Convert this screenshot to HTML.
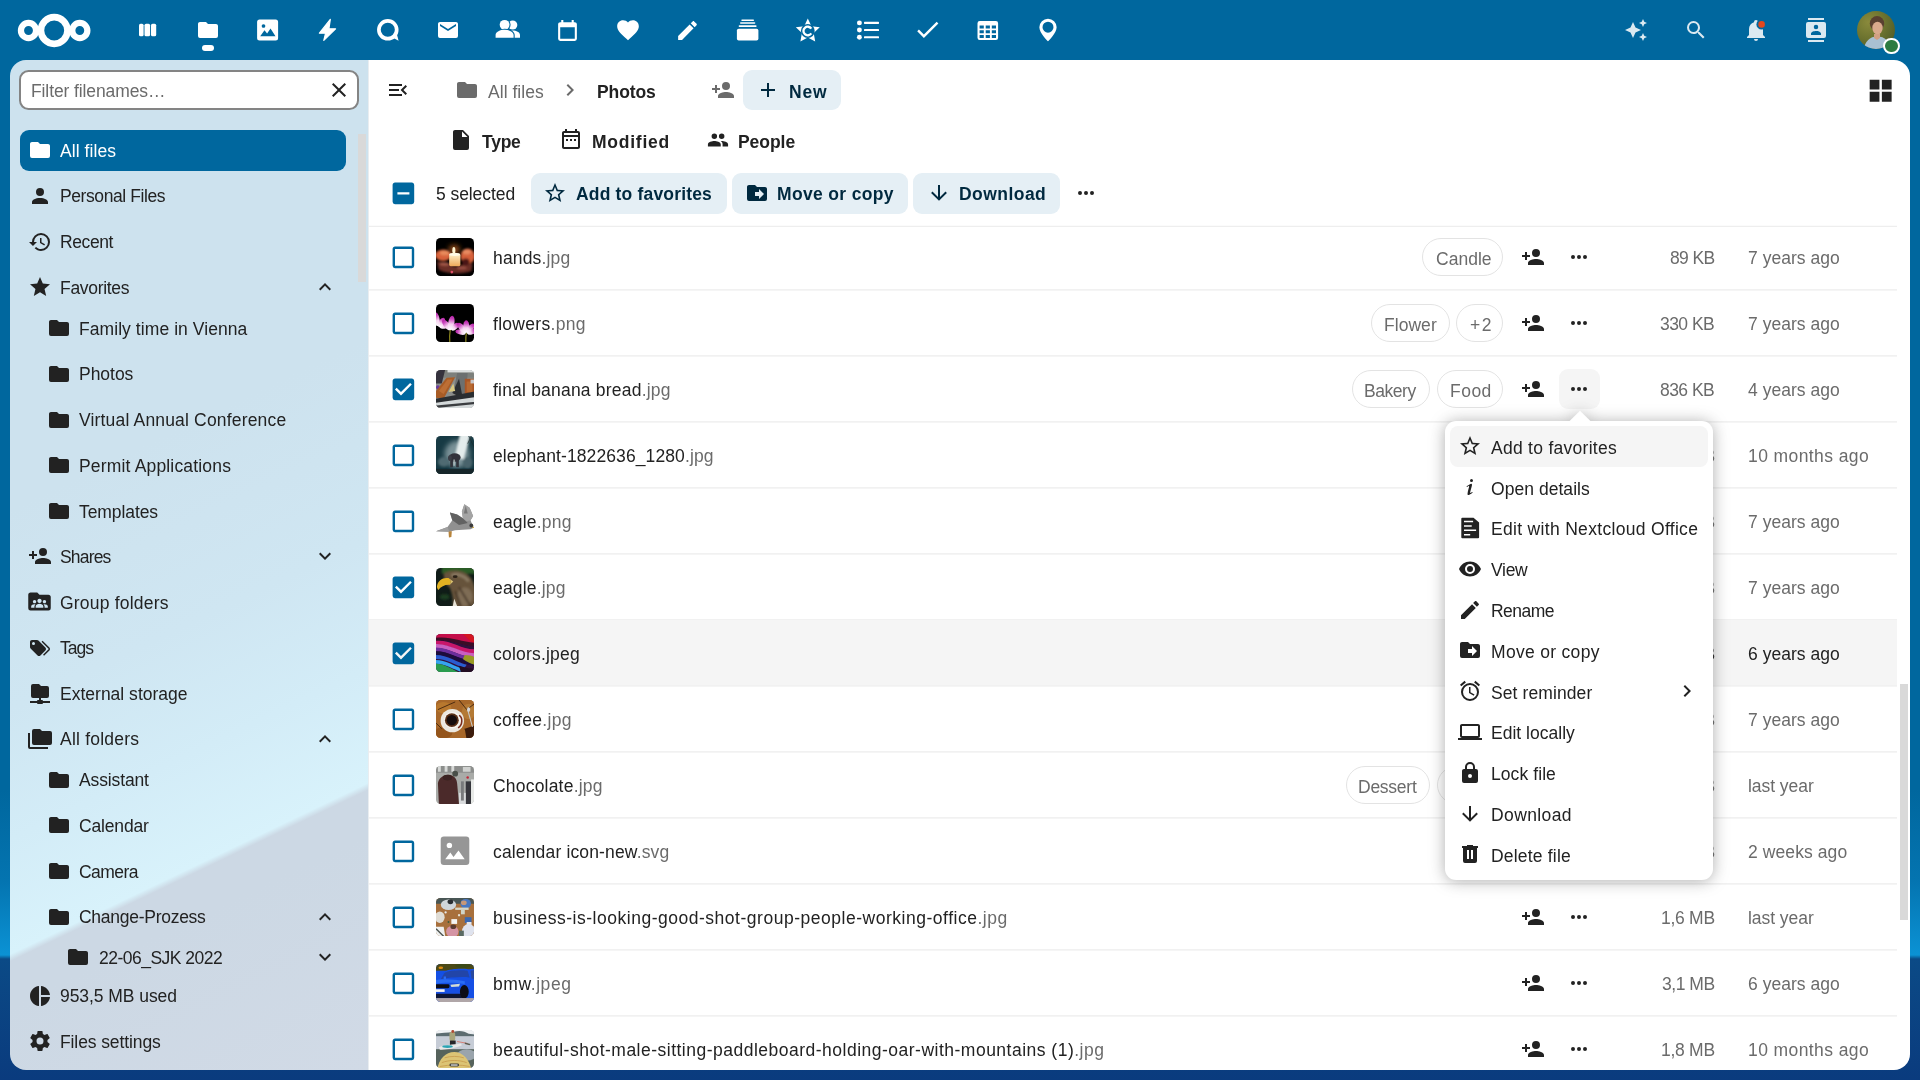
<!DOCTYPE html>
<html><head><meta charset="utf-8"><title>Photos - Files - Nextcloud</title>
<style>
html,body{margin:0;padding:0}
body{width:1920px;height:1080px;position:relative;overflow:hidden;font-family:"Liberation Sans",sans-serif;
background:linear-gradient(180deg,#00679e 0,#00679e 790px,#0474b0 880px,#0b92d4 955px,#0b4a86 959px,#0a3b7e 1080px)}
.t{will-change:transform;position:absolute;height:24px;line-height:24px;white-space:pre;font-family:"Liberation Sans",sans-serif}
svg{display:block;overflow:visible}
</style></head><body>
<svg width="0" height="0" style="position:absolute"><defs><filter id="b05" x="-20%" y="-20%" width="140%" height="140%"><feGaussianBlur stdDeviation=".35"/></filter><filter id="b1" x="-20%" y="-20%" width="140%" height="140%"><feGaussianBlur stdDeviation=".6"/></filter><filter id="b2" x="-30%" y="-30%" width="160%" height="160%"><feGaussianBlur stdDeviation="1.3"/></filter><filter id="b4" x="-50%" y="-50%" width="200%" height="200%"><feGaussianBlur stdDeviation="3"/></filter><linearGradient id="gc" x1="0" y1="0" x2="0" y2="1"><stop offset="0" stop-color="#fff2cc"/><stop offset="1" stop-color="#eea858"/></linearGradient><linearGradient id="gf" x1="0" y1="1" x2="0" y2="0"><stop offset="0" stop-color="#fff"/><stop offset=".4" stop-color="#f6d2f0"/><stop offset=".75" stop-color="#cc4cc0"/><stop offset="1" stop-color="#b41ca4"/></linearGradient></defs></svg>
<svg style="position:absolute;left:10.00px;top:5.00px;" width="100" height="50" viewBox="10 5 100 50"><g fill="none" stroke="#fff"><circle cx="28.5" cy="30.5" r="7.55" stroke-width="6.25"/><circle cx="79.8" cy="30.5" r="7.55" stroke-width="6.25"/><circle cx="54.2" cy="30.5" r="13.3" stroke-width="6.7"/></g></svg>
<svg style="position:absolute;left:135.00px;top:18.00px;" width="26" height="24" viewBox="135 18 26 24"><g fill="#fff"><rect x="139" y="23.75" width="4.6" height="12.5" rx="1.6"/><rect x="144.5" y="23.75" width="5.6" height="12.5" rx="1.6"/><rect x="151" y="23.75" width="5.2" height="12.5" rx="1.6"/></g></svg>
<svg style="position:absolute;left:195.80px;top:18.00px" width="24" height="24" viewBox="0 0 24 24"><path fill="#fff" d="M10,4H4C2.89,4 2,4.89 2,6V18A2,2 0 0,0 4,20H20A2,2 0 0,0 22,18V8C22,6.89 21.1,6 20,6H12L10,4Z"/></svg>
<div style="position:absolute;left:201.80px;top:44.50px;width:12.00px;height:6.00px;background:#fff;border-radius:3px"></div>
<svg style="position:absolute;left:255.00px;top:17.00px;" width="26" height="26" viewBox="255 17 26 26"><path fill="#fff" fill-rule="evenodd" d="M259.6,19.4h16a2.5,2.5 0 0 1 2.5,2.5v16.2a2.5,2.5 0 0 1 -2.5,2.5h-16a2.5,2.5 0 0 1 -2.5,-2.5v-16.2a2.5,2.5 0 0 1 2.5,-2.5zM263.5,24.2a1.8,1.8 0 1 0 0.01,0z M260.2,36.2l4.3,-6 2.6,3.4 3.4,-5.2 5,7.8z"/></svg>
<svg style="position:absolute;left:315.00px;top:16.00px;" width="26" height="28" viewBox="315 16 26 28"><path fill="#fff" stroke="#fff" stroke-width="1.2" stroke-linejoin="round" d="M330.3,19.4 L319.4,33.2 H325.6 L323.8,40.4 L335.6,28.8 H328.9 Z"/></svg>
<svg style="position:absolute;left:375.00px;top:17.00px;" width="26" height="26" viewBox="375 17 26 26"><circle cx="387.8" cy="29.8" r="8.9" fill="none" stroke="#fff" stroke-width="3.7"/><path fill="#fff" d="M392.5,37.5 L398.6,40.8 L396.8,34z"/></svg>
<svg style="position:absolute;left:435.90px;top:18.00px" width="24" height="24" viewBox="0 0 24 24"><path fill="#fff" d="M20,8L12,13L4,8V6L12,11L20,6M20,4H4C2.89,4 2,4.89 2,6V18A2,2 0 0,0 4,20H20A2,2 0 0,0 22,18V6C22,4.89 21.1,4 20,4Z"/></svg>
<svg style="position:absolute;left:493.00px;top:17.00px;" width="30" height="26" viewBox="493 17 30 26"><g fill="#fff"><circle cx="512.7" cy="25" r="4.6"/><path d="M509.5,37.7v-2.2c0,-1.8 -.8,-3.2 -2,-4.2 1.7,-.5 3.6,-.8 5.2,-.8 3.6,0 7.3,1.6 7.3,4.6v2.6z"/><g stroke="#00679e" stroke-width="2.2" paint-order="stroke"><circle cx="504.6" cy="24.8" r="4.9"/><path d="M495.6,37.7v-2.6c0,-3.4 4.6,-5.3 9,-5.3s9,1.9 9,5.3v2.6z"/></g></g></svg>
<svg style="position:absolute;left:555.25px;top:18.50px" width="25" height="25" viewBox="0 0 24 24"><path fill="#fff" d="M19,19H5V8H19M16,1V3H8V1H6V3H5C3.89,3 3,3.89 3,5V19A2,2 0 0,0 5,21H19A2,2 0 0,0 21,19V5C21,3.89 20.1,3 19,3H18V1"/></svg>
<svg style="position:absolute;left:614.70px;top:17.10px" width="26" height="26" viewBox="0 0 24 24"><path fill="#fff" d="M12,21.35L10.55,20.03C5.4,15.36 2,12.27 2,8.5C2,5.41 4.42,3 7.5,3C9.24,3 10.91,3.81 12,5.08C13.09,3.81 14.76,3 16.5,3C19.58,3 22,5.41 22,8.5C22,12.27 18.6,15.36 13.45,20.03L12,21.35Z"/></svg>
<svg style="position:absolute;left:675.10px;top:17.80px" width="25" height="25" viewBox="0 0 24 24"><path fill="#fff" d="M20.71,7.04C21.1,6.65 21.1,6 20.71,5.63L18.37,3.29C18,2.9 17.35,2.9 16.96,3.29L15.12,5.12L18.87,8.87M3,17.25V21H6.75L17.81,9.93L14.06,6.18L3,17.25Z"/></svg>
<svg style="position:absolute;left:735.00px;top:17.00px;" width="26" height="26" viewBox="735 17 26 26"><g fill="#fff"><rect x="736.9" y="28.8" width="21.5" height="11.8" rx="1.8"/><rect x="738.7" y="25.3" width="17.9" height="1.7" rx=".8"/><rect x="740" y="22.2" width="15.3" height="1.6" rx=".8"/><rect x="741.3" y="19.4" width="12.7" height="1.5" rx=".7"/></g></svg>
<svg style="position:absolute;left:794.00px;top:16.00px;" width="28" height="28" viewBox="794 16 28 28"><polygon fill="#fff" points="807.80,18.60 811.44,26.18 819.78,27.31 813.70,33.12 815.21,41.39 807.80,37.40 800.39,41.39 801.90,33.12 795.82,27.31 804.16,26.18"/><circle cx="807.8" cy="31" r="6.9" fill="#00679e"/><path d="M811.3,28.6 A4.3,4.3 0 1 0 811.3,33.4" fill="none" stroke="#fff" stroke-width="2.3"/></svg>
<svg style="position:absolute;left:855.00px;top:18.00px;" width="26" height="24" viewBox="855 18 26 24"><g fill="#fff"><circle cx="859.4" cy="22.9" r="2.45"/><rect x="864" y="21.849999999999998" width="15" height="2.1" rx=".6"/><circle cx="859.4" cy="30.05" r="2.45"/><rect x="864" y="29.0" width="15" height="2.1" rx=".6"/><circle cx="859.4" cy="37.2" r="2.45"/><rect x="864" y="36.150000000000006" width="15" height="2.1" rx=".6"/></g></svg>
<svg style="position:absolute;left:913.10px;top:15.40px" width="29" height="29" viewBox="0 0 24 24"><path fill="#fff" d="M21,7L9,19L3.5,13.5L4.91,12.09L9,16.17L19.59,5.59L21,7Z"/></svg>
<svg style="position:absolute;left:975.00px;top:18.00px;" width="26" height="26" viewBox="975 18 26 26"><path fill="#fff" fill-rule="evenodd" d="M979.7,21h16.2a2.2,2.2 0 0 1 2.2,2.2v14.6a2.2,2.2 0 0 1 -2.2,2.2h-16.2a2.2,2.2 0 0 1 -2.2,-2.2v-14.6a2.2,2.2 0 0 1 2.2,-2.2zM979.6,25.4h4.2v3h-4.2z M985.7,25.4h4.2v3h-4.2z M991.8,25.4h4.2v3h-4.2zM979.6,30.2h4.2v3h-4.2z M985.7,30.2h4.2v3h-4.2z M991.8,30.2h4.2v3h-4.2zM979.6,35h4.2v3h-4.2z M985.7,35h4.2v3h-4.2z M991.8,35h4.2v3h-4.2z"/></svg>
<svg style="position:absolute;left:1033.50px;top:16.00px;" width="28" height="28" viewBox="0 0 24 24"><path fill="#fff" fill-rule="evenodd" d="M12,2.3A7.4,7.4 0 0 0 4.6,9.7C4.6,14.9 12,21.7 12,21.7C12,21.7 19.4,14.9 19.4,9.7A7.4,7.4 0 0 0 12,2.3Z M12,14.3A4.7,4.7 0 1 1 12,4.9A4.7,4.7 0 0 1 12,14.3Z"/></svg>
<svg style="position:absolute;left:1624.00px;top:18.30px" width="24" height="24" viewBox="0 0 24 24"><path fill="#dbe9f1" d="M19,1L17.74,3.75L15,5L17.74,6.26L19,9L20.25,6.26L23,5L20.25,3.75M9,4L6.5,9.5L1,12L6.5,14.5L9,20L11.5,14.5L17,12L11.5,9.5M19,15L17.74,17.74L15,19L17.74,20.25L19,23L20.25,20.25L23,19L20.25,17.74"/></svg>
<svg style="position:absolute;left:1683.75px;top:18.45px" width="24" height="24" viewBox="0 0 24 24"><path fill="#dbe9f1" d="M9.5,3A6.5,6.5 0 0,1 16,9.5C16,11.11 15.41,12.59 14.44,13.73L14.71,14H15.5L20.5,19L19,20.5L14,15.5V14.71L13.73,14.44C12.59,15.41 11.11,16 9.5,16A6.5,6.5 0 0,1 3,9.5A6.5,6.5 0 0,1 9.5,3M9.5,5C7,5 5,7 5,9.5C5,12 7,14 9.5,14C12,14 14,12 14,9.5C14,7 12,5 9.5,5Z"/></svg>
<svg style="position:absolute;left:1743.80px;top:17.80px" width="24" height="24" viewBox="0 0 24 24"><path fill="#dbe9f1" d="M21,19V20H3V19L5,17V11C5,7.9 7.03,5.17 10,4.29C10,4.19 10,4.1 10,4A2,2 0 0,1 12,2A2,2 0 0,1 14,4C14,4.1 14,4.19 14,4.29C16.97,5.17 19,7.9 19,11V17L21,19M14,21A2,2 0 0,1 12,23A2,2 0 0,1 10,21"/></svg>
<svg style="position:absolute;left:1750.00px;top:15.00px;" width="20" height="20" viewBox="1750 15 20 20"><circle cx="1761.6" cy="24.4" r="5.2" fill="#00679e"/><circle cx="1761.6" cy="24.4" r="3.3" fill="#e2471d"/></svg>
<svg style="position:absolute;left:1804.00px;top:18.00px" width="24" height="24" viewBox="0 0 24 24"><path fill="#dbe9f1" d="M20,0H4V2H20V0M4,24H20V22H4V24M20,4H4A2,2 0 0,0 2,6V18A2,2 0 0,0 4,20H20A2,2 0 0,0 22,18V6A2,2 0 0,0 20,4M12,6.75A2.25,2.25 0 0,1 14.25,9A2.25,2.25 0 0,1 12,11.25A2.25,2.25 0 0,1 9.75,9A2.25,2.25 0 0,1 12,6.75M17,17H7V15.5C7,13.83 10.33,13 12,13C13.67,13 17,13.83 17,15.5V17Z"/></svg>
<div style="position:absolute;left:1856.8px;top:10.8px;width:38.4px;height:38.4px;border-radius:50%;overflow:hidden;background:radial-gradient(circle at 30% 30%,#8a8a3c 0,#6f7530 40%,#55602a 75%,#4a5426 100%)"><svg width="38.4" height="38.4" viewBox="0 0 38.4 38.4" style="position:absolute;left:0;top:0;filter:blur(.6px)"><ellipse cx="20" cy="12.5" rx="7.2" ry="7.5" fill="#5a4030"/><ellipse cx="20.5" cy="17" rx="5.2" ry="6.3" fill="#d9a98c"/><path d="M6,40 C8,30 13,25.5 20,25.5 C28,25.5 33,30 34,40z" fill="#a9c0d2"/><path d="M17,23h6v4l-3,2 -3,-2z" fill="#d2a084"/></svg></div>
<div style="position:absolute;left:1883.10px;top:37.80px;width:16.60px;height:16.60px;border-radius:50%;background:#2d7b41;border:2.4px solid #fff;box-sizing:border-box"></div>
<div id="nav" style="position:absolute;left:10px;top:60px;width:358px;height:1010px;border-radius:16px 0 0 16px;overflow:hidden;background:linear-gradient(154.4deg,#cde2ee 0,#cde2ee 38%,#cfe6f2 55%,#d3ecf7 66%,#d8f2fb 75.7%,#ccd8e4 76.3%,#ccd8e4 80%,#d1dae6 100%)"></div>
<div style="position:absolute;left:368.00px;top:60.00px;width:1.00px;height:1010.00px;background:#e9edf0"></div>
<div id="main" style="position:absolute;left:369px;top:60px;width:1541px;height:1010px;border-radius:0 16px 16px 0;background:#fff"></div>
<div style="position:absolute;left:19.4px;top:69.7px;width:339.4px;height:40.5px;box-sizing:border-box;border:2.2px solid #848484;border-radius:9.5px;background:#fff"></div>
<div class="t" style="left:30.75px;top:79.00px;font-size:17.5px;font-weight:400;letter-spacing:-0.103px"><span style="color:#6b6b6b">Filter filenames…</span></div>
<svg style="position:absolute;left:326.75px;top:78.00px" width="24" height="24" viewBox="0 0 24 24"><path fill="#222222" d="M19,6.41L17.59,5L12,10.59L6.41,5L5,6.41L10.59,12L5,17.59L6.41,19L12,13.41L17.59,19L19,17.59L13.41,12L19,6.41Z"/></svg>
<div style="position:absolute;left:357.80px;top:133.50px;width:8.20px;height:148.00px;background:#d9d9d9"></div>
<div style="position:absolute;left:19.50px;top:130.00px;width:326.30px;height:40.60px;background:#00679e;border-radius:9px"></div>
<svg style="position:absolute;left:27.70px;top:138.20px" width="24" height="24" viewBox="0 0 24 24"><path fill="#fff" d="M10,4H4C2.89,4 2,4.89 2,6V18A2,2 0 0,0 4,20H20A2,2 0 0,0 22,18V8C22,6.89 21.1,6 20,6H12L10,4Z"/></svg>
<div class="t" style="left:60.20px;top:138.70px;font-size:17.5px;font-weight:400;letter-spacing:0.077px"><span style="color:#fff">All files</span></div>
<svg style="position:absolute;left:27.70px;top:183.90px" width="24" height="24" viewBox="0 0 24 24"><path fill="#222222" d="M12,4A4,4 0 0,1 16,8A4,4 0 0,1 12,12A4,4 0 0,1 8,8A4,4 0 0,1 12,4M12,14C16.42,14 20,15.79 20,18V20H4V18C4,15.79 7.58,14 12,14Z"/></svg>
<div class="t" style="left:60.20px;top:184.40px;font-size:17.5px;font-weight:400;letter-spacing:-0.410px"><span style="color:#222222">Personal Files</span></div>
<svg style="position:absolute;left:27.70px;top:229.60px" width="24" height="24" viewBox="0 0 24 24"><path fill="#222222" d="M13.5,8H12V13L16.28,15.54L17,14.33L13.5,12.25V8M13,3A9,9 0 0,0 4,12H1L4.96,16.03L9,12H6A7,7 0 0,1 13,5A7,7 0 0,1 20,12A7,7 0 0,1 13,19C11.07,19 9.32,18.21 8.06,16.94L6.64,18.36C8.27,20 10.5,21 13,21A9,9 0 0,0 22,12A9,9 0 0,0 13,3"/></svg>
<div class="t" style="left:60.20px;top:230.10px;font-size:17.5px;font-weight:400;letter-spacing:-0.407px"><span style="color:#222222">Recent</span></div>
<svg style="position:absolute;left:27.70px;top:275.20px" width="24" height="24" viewBox="0 0 24 24"><path fill="#222222" d="M12,17.27L18.18,21L16.54,13.97L22,9.24L14.81,8.62L12,2L9.19,8.62L2,9.24L7.45,13.97L5.82,21L12,17.27Z"/></svg>
<div class="t" style="left:60.20px;top:275.70px;font-size:17.5px;font-weight:400;letter-spacing:-0.302px"><span style="color:#222222">Favorites</span></div>
<svg style="position:absolute;left:313.00px;top:275.20px" width="24" height="24" viewBox="0 0 24 24"><path fill="#222222" d="M7.41,15.41L12,10.83L16.59,15.41L18,14L12,8L6,14L7.41,15.41Z"/></svg>
<svg style="position:absolute;left:47.00px;top:316.20px" width="24" height="24" viewBox="0 0 24 24"><path fill="#222222" d="M10,4H4C2.89,4 2,4.89 2,6V18A2,2 0 0,0 4,20H20A2,2 0 0,0 22,18V8C22,6.89 21.1,6 20,6H12L10,4Z"/></svg>
<div class="t" style="left:79.40px;top:316.70px;font-size:17.5px;font-weight:400;letter-spacing:0.068px"><span style="color:#222222">Family time in Vienna</span></div>
<svg style="position:absolute;left:47.00px;top:361.90px" width="24" height="24" viewBox="0 0 24 24"><path fill="#222222" d="M10,4H4C2.89,4 2,4.89 2,6V18A2,2 0 0,0 4,20H20A2,2 0 0,0 22,18V8C22,6.89 21.1,6 20,6H12L10,4Z"/></svg>
<div class="t" style="left:79.40px;top:362.40px;font-size:17.5px;font-weight:400;letter-spacing:-0.026px"><span style="color:#222222">Photos</span></div>
<svg style="position:absolute;left:47.00px;top:407.60px" width="24" height="24" viewBox="0 0 24 24"><path fill="#222222" d="M10,4H4C2.89,4 2,4.89 2,6V18A2,2 0 0,0 4,20H20A2,2 0 0,0 22,18V8C22,6.89 21.1,6 20,6H12L10,4Z"/></svg>
<div class="t" style="left:79.40px;top:408.10px;font-size:17.5px;font-weight:400;letter-spacing:0.171px"><span style="color:#222222">Virtual Annual Conference</span></div>
<svg style="position:absolute;left:47.00px;top:453.30px" width="24" height="24" viewBox="0 0 24 24"><path fill="#222222" d="M10,4H4C2.89,4 2,4.89 2,6V18A2,2 0 0,0 4,20H20A2,2 0 0,0 22,18V8C22,6.89 21.1,6 20,6H12L10,4Z"/></svg>
<div class="t" style="left:79.40px;top:453.80px;font-size:17.5px;font-weight:400;letter-spacing:0.170px"><span style="color:#222222">Permit Applications</span></div>
<svg style="position:absolute;left:47.00px;top:499.00px" width="24" height="24" viewBox="0 0 24 24"><path fill="#222222" d="M10,4H4C2.89,4 2,4.89 2,6V18A2,2 0 0,0 4,20H20A2,2 0 0,0 22,18V8C22,6.89 21.1,6 20,6H12L10,4Z"/></svg>
<div class="t" style="left:79.40px;top:499.50px;font-size:17.5px;font-weight:400;letter-spacing:-0.082px"><span style="color:#222222">Templates</span></div>
<svg style="position:absolute;left:27.70px;top:544.30px" width="24" height="24" viewBox="0 0 24 24"><path fill="#222222" d="M15,14C12.33,14 7,15.33 7,18V20H23V18C23,15.33 17.67,14 15,14M6,10V7H4V10H1V12H4V15H6V12H9V10M15,12A4,4 0 0,0 19,8A4,4 0 0,0 15,4A4,4 0 0,0 11,8A4,4 0 0,0 15,12Z"/></svg>
<div class="t" style="left:60.20px;top:544.80px;font-size:17.5px;font-weight:400;letter-spacing:-0.830px"><span style="color:#222222">Shares</span></div>
<svg style="position:absolute;left:313.00px;top:544.30px" width="24" height="24" viewBox="0 0 24 24"><path fill="#222222" d="M7.41,8.58L12,13.17L16.59,8.58L18,10L12,16L6,10L7.41,8.58Z"/></svg>
<div class="t" style="left:60.20px;top:590.50px;font-size:17.5px;font-weight:400;letter-spacing:0.210px"><span style="color:#222222">Group folders</span></div>
<svg style="position:absolute;left:26.25px;top:588.10px;" width="27" height="27" viewBox="0 0 24 24"><path fill="#222222" fill-rule="evenodd" d="M10,4H4C2.89,4 2,4.89 2,6V18A2,2 0 0,0 4,20H20A2,2 0 0,0 22,18V8C22,6.89 21.1,6 20,6H12L10,4Z M12,9.6a1.9,1.9 0 1 0 .01,0z M7.6,10.6a1.5,1.5 0 1 0 .01,0z M16.4,10.6a1.5,1.5 0 1 0 .01,0zM8.6,17.6v-1.3c0,-1.5 1.8,-2.4 3.4,-2.4s3.4,.9 3.4,2.4v1.3z M4.6,17.6v-1.1c0,-1.2 1.4,-2 3,-2c.3,0 .5,0 .8,.1c-.6,.5 -.9,1.100 -.9,1.800v1.200z M19.4,17.6v-1.1c0,-1.2 -1.400,-2 -3,-2c-.3,0 -.5,0 -.8,.1c.6,.5 .9,1.100 .9,1.800v1.200z"/></svg>
<svg style="position:absolute;left:27.70px;top:635.70px" width="24" height="24" viewBox="0 0 24 24"><path fill="#222222" d="M5.5,9A1.5,1.5 0 0,0 7,7.5A1.5,1.5 0 0,0 5.5,6A1.5,1.5 0 0,0 4,7.5A1.5,1.5 0 0,0 5.5,9M17.41,11.58C17.77,11.94 18,12.44 18,13C18,13.55 17.78,14.05 17.41,14.41L12.41,19.41C12.05,19.77 11.55,20 11,20C10.45,20 9.95,19.78 9.58,19.41L2.59,12.42C2.22,12.05 2,11.55 2,11V6C2,4.89 2.89,4 4,4H9C9.55,4 10.05,4.22 10.41,4.58L17.41,11.58M13.54,5.71L14.54,4.71L21.41,11.58C21.78,11.94 22,12.45 22,13C22,13.55 21.78,14.05 21.42,14.41L16.04,19.79L15.04,18.79L20.75,13L13.54,5.71Z"/></svg>
<div class="t" style="left:60.20px;top:636.20px;font-size:17.5px;font-weight:400;letter-spacing:-0.972px"><span style="color:#222222">Tags</span></div>
<svg style="position:absolute;left:27.70px;top:681.40px" width="24" height="24" viewBox="0 0 24 24"><path fill="#222222" d="M3,15V5A2,2 0 0,1 5,3H11L13,5H19A2,2 0 0,1 21,7V15A2,2 0 0,1 19,17H13V19H14A1,1 0 0,1 15,20H22V22H15A1,1 0 0,1 14,23H10A1,1 0 0,1 9,22H2V20H9A1,1 0 0,1 10,19H11V17H5A2,2 0 0,1 3,15Z"/></svg>
<div class="t" style="left:60.20px;top:681.90px;font-size:17.5px;font-weight:400;letter-spacing:0.007px"><span style="color:#222222">External storage</span></div>
<svg style="position:absolute;left:27.70px;top:726.80px" width="24" height="24" viewBox="0 0 24 24"><path fill="#222222" d="M22,4H14L12,2H6A2,2 0 0,0 4,4V16A2,2 0 0,0 6,18H22A2,2 0 0,0 24,16V6A2,2 0 0,0 22,4M2,6H0V11H0V20A2,2 0 0,0 2,22H20V20H2V6Z"/></svg>
<div class="t" style="left:60.20px;top:727.30px;font-size:17.5px;font-weight:400;letter-spacing:0.221px"><span style="color:#222222">All folders</span></div>
<svg style="position:absolute;left:313.00px;top:726.80px" width="24" height="24" viewBox="0 0 24 24"><path fill="#222222" d="M7.41,15.41L12,10.83L16.59,15.41L18,14L12,8L6,14L7.41,15.41Z"/></svg>
<svg style="position:absolute;left:47.00px;top:767.70px" width="24" height="24" viewBox="0 0 24 24"><path fill="#222222" d="M10,4H4C2.89,4 2,4.89 2,6V18A2,2 0 0,0 4,20H20A2,2 0 0,0 22,18V8C22,6.89 21.1,6 20,6H12L10,4Z"/></svg>
<div class="t" style="left:79.40px;top:768.20px;font-size:17.5px;font-weight:400;letter-spacing:-0.130px"><span style="color:#222222">Assistant</span></div>
<svg style="position:absolute;left:47.00px;top:813.40px" width="24" height="24" viewBox="0 0 24 24"><path fill="#222222" d="M10,4H4C2.89,4 2,4.89 2,6V18A2,2 0 0,0 4,20H20A2,2 0 0,0 22,18V8C22,6.89 21.1,6 20,6H12L10,4Z"/></svg>
<div class="t" style="left:79.40px;top:813.90px;font-size:17.5px;font-weight:400;letter-spacing:-0.156px"><span style="color:#222222">Calendar</span></div>
<svg style="position:absolute;left:47.00px;top:859.10px" width="24" height="24" viewBox="0 0 24 24"><path fill="#222222" d="M10,4H4C2.89,4 2,4.89 2,6V18A2,2 0 0,0 4,20H20A2,2 0 0,0 22,18V8C22,6.89 21.1,6 20,6H12L10,4Z"/></svg>
<div class="t" style="left:79.40px;top:859.60px;font-size:17.5px;font-weight:400;letter-spacing:-0.532px"><span style="color:#222222">Camera</span></div>
<svg style="position:absolute;left:47.00px;top:904.80px" width="24" height="24" viewBox="0 0 24 24"><path fill="#222222" d="M10,4H4C2.89,4 2,4.89 2,6V18A2,2 0 0,0 4,20H20A2,2 0 0,0 22,18V8C22,6.89 21.1,6 20,6H12L10,4Z"/></svg>
<div class="t" style="left:79.40px;top:905.30px;font-size:17.5px;font-weight:400;letter-spacing:-0.269px"><span style="color:#222222">Change-Prozess</span></div>
<svg style="position:absolute;left:313.00px;top:904.80px" width="24" height="24" viewBox="0 0 24 24"><path fill="#222222" d="M7.41,15.41L12,10.83L16.59,15.41L18,14L12,8L6,14L7.41,15.41Z"/></svg>
<svg style="position:absolute;left:66.20px;top:945.20px" width="24" height="24" viewBox="0 0 24 24"><path fill="#222222" d="M10,4H4C2.89,4 2,4.89 2,6V18A2,2 0 0,0 4,20H20A2,2 0 0,0 22,18V8C22,6.89 21.1,6 20,6H12L10,4Z"/></svg>
<div class="t" style="left:98.60px;top:945.70px;font-size:17.5px;font-weight:400;letter-spacing:-0.519px"><span style="color:#222222">22-06_SJK 2022</span></div>
<svg style="position:absolute;left:313.00px;top:945.20px" width="24" height="24" viewBox="0 0 24 24"><path fill="#222222" d="M7.41,8.58L12,13.17L16.59,8.58L18,10L12,16L6,10L7.41,8.58Z"/></svg>
<svg style="position:absolute;left:27.70px;top:983.80px" width="24" height="24" viewBox="0 0 24 24"><path fill="#222222" d="M11,2V22C5.9,21.5 2,17.2 2,12C2,6.8 5.9,2.5 11,2M13,2V11H22C21.5,6.2 17.8,2.5 13,2M13,13V22C17.7,21.5 21.5,17.8 22,13H13Z"/></svg>
<div class="t" style="left:60.20px;top:984.30px;font-size:17.5px;font-weight:400;letter-spacing:-0.057px"><span style="color:#222222">953,5 MB used</span></div>
<svg style="position:absolute;left:27.70px;top:1029.20px" width="24" height="24" viewBox="0 0 24 24"><path fill="#222222" d="M12,15.5A3.5,3.5 0 0,1 8.5,12A3.5,3.5 0 0,1 12,8.5A3.5,3.5 0 0,1 15.5,12A3.5,3.5 0 0,1 12,15.5M19.43,12.97C19.47,12.65 19.5,12.33 19.5,12C19.5,11.67 19.47,11.34 19.43,11L21.54,9.37C21.73,9.22 21.78,8.95 21.66,8.73L19.66,5.27C19.54,5.05 19.27,4.96 19.05,5.05L16.56,6.05C16.04,5.66 15.5,5.32 14.87,5.07L14.5,2.42C14.46,2.18 14.25,2 14,2H10C9.75,2 9.54,2.18 9.5,2.42L9.13,5.07C8.5,5.32 7.96,5.66 7.44,6.05L4.95,5.05C4.73,4.96 4.46,5.05 4.34,5.27L2.34,8.73C2.21,8.95 2.27,9.22 2.46,9.37L4.57,11C4.53,11.34 4.5,11.67 4.5,12C4.5,12.33 4.53,12.65 4.57,12.97L2.46,14.63C2.27,14.78 2.21,15.05 2.34,15.27L4.34,18.73C4.46,18.95 4.73,19.03 4.95,18.95L7.44,17.94C7.96,18.34 8.5,18.68 9.13,18.93L9.5,21.58C9.54,21.82 9.75,22 10,22H14C14.25,22 14.46,21.82 14.5,21.58L14.87,18.93C15.5,18.67 16.04,18.34 16.56,17.94L19.05,18.95C19.27,19.03 19.54,18.95 19.66,18.73L21.66,15.27C21.78,15.05 21.73,14.78 21.54,14.63L19.43,12.97Z"/></svg>
<div class="t" style="left:60.20px;top:1029.70px;font-size:17.5px;font-weight:400;letter-spacing:-0.102px"><span style="color:#222222">Files settings</span></div>
<svg style="position:absolute;left:386.30px;top:78.30px" width="24" height="24" viewBox="0 0 24 24"><path fill="#222222" d="M21,15.61L19.59,17L14.58,12L19.59,7L21,8.39L17.44,12L21,15.61M3,6H16V8H3V6M3,13V11H13V13H3M3,18V16H16V18H3Z"/></svg>
<svg style="position:absolute;left:455.00px;top:78.20px" width="24" height="24" viewBox="0 0 24 24"><path fill="#6b6b6b" d="M10,4H4C2.89,4 2,4.89 2,6V18A2,2 0 0,0 4,20H20A2,2 0 0,0 22,18V8C22,6.89 21.1,6 20,6H12L10,4Z"/></svg>
<div class="t" style="left:487.60px;top:79.50px;font-size:17.5px;font-weight:400;letter-spacing:0.040px"><span style="color:#6b6b6b">All files</span></div>
<svg style="position:absolute;left:558.30px;top:78.20px" width="24" height="24" viewBox="0 0 24 24"><path fill="#6b6b6b" d="M8.59,16.58L13.17,12L8.59,7.41L10,6L16,12L10,18L8.59,16.58Z"/></svg>
<div class="t" style="left:596.50px;top:79.50px;font-size:17.5px;font-weight:700;letter-spacing:-0.094px"><span style="color:#222">Photos</span></div>
<svg style="position:absolute;left:710.70px;top:78.20px" width="24" height="24" viewBox="0 0 24 24"><path fill="#6b6b6b" d="M15,14C12.33,14 7,15.33 7,18V20H23V18C23,15.33 17.67,14 15,14M6,10V7H4V10H1V12H4V15H6V12H9V10M15,12A4,4 0 0,0 19,8A4,4 0 0,0 15,4A4,4 0 0,0 11,8A4,4 0 0,0 15,12Z"/></svg>
<div style="position:absolute;left:742.80px;top:70.00px;width:98.20px;height:40.00px;background:#e5eff5;border-radius:9px"></div>
<svg style="position:absolute;left:755.50px;top:78.20px" width="24" height="24" viewBox="0 0 24 24"><path fill="#00293f" d="M19,13H13V19H11V13H5V11H11V5H13V11H19V13Z"/></svg>
<div class="t" style="left:788.70px;top:79.50px;font-size:17.5px;font-weight:700;letter-spacing:0.815px"><span style="color:#00293f">New</span></div>
<svg style="position:absolute;left:1866.05px;top:75.65px" width="29.3" height="29.3" viewBox="0 0 24 24"><path fill="#222222" d="M3,11H11V3H3M3,21H11V13H3M13,21H21V13H13M13,3V11H21V3"/></svg>
<svg style="position:absolute;left:449.20px;top:128.20px" width="24" height="24" viewBox="0 0 24 24"><path fill="#222222" d="M13,9V3.5L18.5,9M6,2C4.89,2 4,2.89 4,4V20A2,2 0 0,0 6,22H18A2,2 0 0,0 20,20V8L14,2H6Z"/></svg>
<div class="t" style="left:482.40px;top:130.20px;font-size:17.5px;font-weight:700;letter-spacing:-0.238px"><span style="color:#222">Type</span></div>
<svg style="position:absolute;left:559.30px;top:127.80px" width="24" height="24" viewBox="0 0 24 24"><path fill="#222222" d="M7,11H9V13H7V11M21,5V19C21,20.11 20.11,21 19,21H5C3.89,21 3,20.1 3,19V5C3,3.9 3.9,3 5,3H6V1H8V3H16V1H18V3H19A2,2 0 0,1 21,5M5,7H19V5H5V7M19,19V9H5V19H19M15,13V11H17V13H15M11,13V11H13V13H11Z"/></svg>
<div class="t" style="left:591.50px;top:130.20px;font-size:17.5px;font-weight:700;letter-spacing:0.751px"><span style="color:#222">Modified</span></div>
<svg style="position:absolute;left:706.60px;top:129.30px" width="22" height="22" viewBox="0 0 24 24"><path fill="#222222" d="M16,13C15.71,13 15.38,13 15.03,13.05C16.19,13.89 17,15 17,16.5V19H23V16.5C23,14.17 18.33,13 16,13M8,13C5.67,13 1,14.17 1,16.5V19H15V16.5C15,14.17 10.33,13 8,13M8,11A3,3 0 0,0 11,8A3,3 0 0,0 8,5A3,3 0 0,0 5,8A3,3 0 0,0 8,11M16,11A3,3 0 0,0 19,8A3,3 0 0,0 16,5A3,3 0 0,0 13,8A3,3 0 0,0 16,11Z"/></svg>
<div class="t" style="left:738.00px;top:130.20px;font-size:17.5px;font-weight:700;letter-spacing:-0.049px"><span style="color:#222">People</span></div>
<svg style="position:absolute;left:388.95px;top:178.80px" width="28.8" height="28.8" viewBox="0 0 24 24"><path fill="#00679e" d="M17,13H7V11H17M19,3H5C3.89,3 3,3.89 3,5V19A2,2 0 0,0 5,21H19A2,2 0 0,0 21,19V5C21,3.89 20.1,3 19,3Z"/></svg>
<div class="t" style="left:436.40px;top:182.30px;font-size:17.5px;font-weight:400;letter-spacing:-0.071px"><span style="color:#222">5 selected</span></div>
<div style="position:absolute;left:530.70px;top:173.00px;width:196.60px;height:40.60px;background:#e5eff5;border-radius:9px"></div>
<svg style="position:absolute;left:543.40px;top:181.30px" width="24" height="24" viewBox="0 0 24 24"><path fill="#00293f" d="M12,15.39L8.24,17.66L9.23,13.38L5.91,10.5L10.29,10.13L12,6.09L13.71,10.13L18.09,10.5L14.77,13.38L15.76,17.66M22,9.24L14.81,8.63L12,2L9.19,8.63L2,9.24L7.45,13.97L5.82,21L12,17.27L18.18,21L16.54,13.97L22,9.24Z"/></svg>
<div class="t" style="left:576.30px;top:182.30px;font-size:17.5px;font-weight:700;letter-spacing:0.175px"><span style="color:#00293f">Add to favorites</span></div>
<div style="position:absolute;left:732.20px;top:173.00px;width:176.00px;height:40.60px;background:#e5eff5;border-radius:9px"></div>
<svg style="position:absolute;left:745.00px;top:181.30px" width="24" height="24" viewBox="0 0 24 24"><path fill="#00293f" d="M14,18V15H10V11H14V8L19,13M20,6H12L10,4H4C2.89,4 2,4.89 2,6V18A2,2 0 0,0 4,20H20A2,2 0 0,0 22,18V8C22,6.89 21.1,6 20,6Z"/></svg>
<div class="t" style="left:777.40px;top:182.30px;font-size:17.5px;font-weight:700;letter-spacing:0.339px"><span style="color:#00293f">Move or copy</span></div>
<div style="position:absolute;left:913.40px;top:173.00px;width:146.30px;height:40.60px;background:#e5eff5;border-radius:9px"></div>
<svg style="position:absolute;left:926.60px;top:181.30px" width="24" height="24" viewBox="0 0 24 24"><path fill="#00293f" d="M11,4H13V16L18.5,10.5L19.92,11.92L12,19.84L4.08,11.92L5.5,10.5L11,16V4Z"/></svg>
<div class="t" style="left:959.30px;top:182.30px;font-size:17.5px;font-weight:700;letter-spacing:0.455px"><span style="color:#00293f">Download</span></div>
<svg style="position:absolute;left:1074.30px;top:181.30px" width="24" height="24" viewBox="0 0 24 24"><path fill="#222222" d="M16,12A2,2 0 0,1 18,10A2,2 0 0,1 20,12A2,2 0 0,1 18,14A2,2 0 0,1 16,12M10,12A2,2 0 0,1 12,10A2,2 0 0,1 14,12A2,2 0 0,1 12,14A2,2 0 0,1 10,12M4,12A2,2 0 0,1 6,10A2,2 0 0,1 8,12A2,2 0 0,1 6,14A2,2 0 0,1 4,12Z"/></svg>
<div style="position:absolute;left:369.00px;top:225.00px;width:1528.40px;height:2.00px;background:linear-gradient(#fbfbfb 50%,#eeeeee 50%)"></div>
<div style="position:absolute;left:0;top:0;width:1910px;height:1070px;overflow:hidden">
<div style="position:absolute;left:369.00px;top:289.00px;width:1528.40px;height:2.00px;background:linear-gradient(#f1f1f1 50%,#f5f5f5 50%)"></div>
<svg style="position:absolute;left:388.95px;top:242.60px" width="28.8" height="28.8" viewBox="0 0 24 24"><path fill="#00679e" d="M19,3H5C3.89,3 3,3.89 3,5V19A2,2 0 0,0 5,21H19A2,2 0 0,0 21,19V5C21,3.89 20.1,3 19,3M19,5V19H5V5H19Z"/></svg>
<div style="position:absolute;left:435.8px;top:237.80px;width:38.4px;height:38.4px;border-radius:4.5px;overflow:hidden"><svg width="38.4" height="38.4" viewBox="0 0 40 40" style="background:#000"><g filter="url(#b4)"><ellipse cx="19" cy="12" rx="6" ry="5" fill="#8a4616"/></g><g filter="url(#b2)"><ellipse cx="7.5" cy="18" rx="8.5" ry="6" fill="#d8623a"/><ellipse cx="9" cy="15.500" rx="5" ry="2.600" fill="#e88a5c"/><ellipse cx="33" cy="19" rx="7.5" ry="8" fill="#d6603a"/><ellipse cx="32" cy="14.500" rx="4.500" ry="2.600" fill="#e88a60"/><path d="M1,25 C8,24 14,28 20,30 C26,28 32,26 38,27 L37,34 C30,38 12,38 3,33z" fill="#6a2e26"/><ellipse cx="31" cy="25" rx="4" ry="3.600" fill="#4a1812"/><ellipse cx="9" cy="27" rx="5" ry="1.800" fill="#a45848"/><ellipse cx="27" cy="31" rx="5" ry="1.600" fill="#9a5044"/></g><g filter="url(#b1)"><rect x="13.7" y="16.5" width="11.7" height="13" rx="1.5" fill="url(#gc)"/><ellipse cx="19.5" cy="17" rx="5.700" ry="1.700" fill="#fffbe8"/><ellipse cx="18.6" cy="13" rx="1.600" ry="3.600" fill="#fff6d4"/><circle cx="16.500" cy="35.500" r="1.400" fill="#e0506a"/></g></svg></div>
<div class="t" style="left:492.80px;top:246.00px;font-size:17.5px;font-weight:400;letter-spacing:0.155px"><span style="color:#222222">hands</span><span style="color:#6b6b6b">.jpg</span></div>
<div style="position:absolute;left:1422.00px;top:238.40px;width:81.40px;height:37.60px;box-sizing:border-box;border:1.2px solid #e3e3e3;border-radius:19px;background:#fff"></div>
<div class="t" style="left:1435.60px;top:247.30px;font-size:17.5px;font-weight:400;letter-spacing:0.015px"><span style="color:#6b6b6b">Candle</span></div>
<svg style="position:absolute;left:1520.60px;top:245.00px" width="24" height="24" viewBox="0 0 24 24"><path fill="#222222" d="M15,14C12.33,14 7,15.33 7,18V20H23V18C23,15.33 17.67,14 15,14M6,10V7H4V10H1V12H4V15H6V12H9V10M15,12A4,4 0 0,0 19,8A4,4 0 0,0 15,4A4,4 0 0,0 11,8A4,4 0 0,0 15,12Z"/></svg>
<svg style="position:absolute;left:1567.20px;top:245.00px" width="24" height="24" viewBox="0 0 24 24"><path fill="#222222" d="M16,12A2,2 0 0,1 18,10A2,2 0 0,1 20,12A2,2 0 0,1 18,14A2,2 0 0,1 16,12M10,12A2,2 0 0,1 12,10A2,2 0 0,1 14,12A2,2 0 0,1 12,14A2,2 0 0,1 10,12M4,12A2,2 0 0,1 6,10A2,2 0 0,1 8,12A2,2 0 0,1 6,14A2,2 0 0,1 4,12Z"/></svg>
<div class="t" style="left:1669.80px;top:246.00px;font-size:17.5px;font-weight:400;letter-spacing:-0.625px"><span style="color:#6b6b6b">89 KB</span></div>
<div class="t" style="left:1748.10px;top:246.00px;font-size:17.5px;font-weight:400;letter-spacing:0.038px"><span style="color:#6b6b6b">7 years ago</span></div>
<div style="position:absolute;left:369.00px;top:355.00px;width:1528.40px;height:2.00px;background:linear-gradient(#f1f1f1 50%,#f5f5f5 50%)"></div>
<svg style="position:absolute;left:388.95px;top:308.60px" width="28.8" height="28.8" viewBox="0 0 24 24"><path fill="#00679e" d="M19,3H5C3.89,3 3,3.89 3,5V19A2,2 0 0,0 5,21H19A2,2 0 0,0 21,19V5C21,3.89 20.1,3 19,3M19,5V19H5V5H19Z"/></svg>
<div style="position:absolute;left:435.8px;top:303.80px;width:38.4px;height:38.4px;border-radius:4.5px;overflow:hidden"><svg width="38.4" height="38.4" viewBox="0 0 40 40" style="background:#000"><g filter="url(#b05)"><path d="M14.8,27 C14.2,31 14.1,36 14.4,40" stroke="#9c9622" stroke-width="1.1" fill="none"/><path d="M31.6,30 C31.1,33 31,37 31.1,40" stroke="#9c9622" stroke-width="1.1" fill="none"/></g><g filter="url(#b05)"><ellipse cx="0.44" cy="15.66" rx="3.25" ry="7.5" fill="url(#gf)" transform="rotate(-12 0.44 15.66)"/><ellipse cx="5.75" cy="19.24" rx="3.0" ry="5.5" fill="url(#gf)" transform="rotate(30 5.75 19.24)"/><ellipse cx="9.71" cy="22.65" rx="2.75" ry="6.0" fill="url(#gf)" transform="rotate(72 9.71 22.65)"/><ellipse cx="11.00" cy="21.88" rx="3.0" ry="6.5" fill="url(#gf)" transform="rotate(-38 11.00 21.88)"/><ellipse cx="16.04" cy="19.57" rx="3.25" ry="7.5" fill="url(#gf)" transform="rotate(8 16.04 19.57)"/><ellipse cx="19.72" cy="23.65" rx="2.75" ry="5.0" fill="url(#gf)" transform="rotate(48 19.72 23.65)"/><ellipse cx="25.62" cy="29.36" rx="2.5" ry="5.5" fill="url(#gf)" transform="rotate(-78 25.62 29.36)"/><ellipse cx="27.00" cy="24.88" rx="3.0" ry="6.5" fill="url(#gf)" transform="rotate(-38 27.00 24.88)"/><ellipse cx="31.50" cy="23.50" rx="3.25" ry="6.5" fill="url(#gf)" transform="rotate(0 31.50 23.50)"/><ellipse cx="35.86" cy="25.40" rx="3.0" ry="6.0" fill="url(#gf)" transform="rotate(40 35.86 25.40)"/><ellipse cx="37.26" cy="28.95" rx="2.75" ry="5.0" fill="url(#gf)" transform="rotate(72 37.26 28.95)"/></g></svg></div>
<div class="t" style="left:492.80px;top:312.00px;font-size:17.5px;font-weight:400;letter-spacing:0.294px"><span style="color:#222222">flowers</span><span style="color:#6b6b6b">.png</span></div>
<div style="position:absolute;left:1371.00px;top:304.40px;width:78.50px;height:37.60px;box-sizing:border-box;border:1.2px solid #e3e3e3;border-radius:19px;background:#fff"></div>
<div class="t" style="left:1383.60px;top:313.30px;font-size:17.5px;font-weight:400;letter-spacing:0.044px"><span style="color:#6b6b6b">Flower</span></div>
<div style="position:absolute;left:1456.00px;top:304.40px;width:47.40px;height:37.60px;box-sizing:border-box;border:1.2px solid #e3e3e3;border-radius:19px;background:#fff"></div>
<div class="t" style="left:1469.60px;top:313.30px;font-size:17.5px;font-weight:400;letter-spacing:1.500px"><span style="color:#6b6b6b">+2</span></div>
<svg style="position:absolute;left:1520.60px;top:311.00px" width="24" height="24" viewBox="0 0 24 24"><path fill="#222222" d="M15,14C12.33,14 7,15.33 7,18V20H23V18C23,15.33 17.67,14 15,14M6,10V7H4V10H1V12H4V15H6V12H9V10M15,12A4,4 0 0,0 19,8A4,4 0 0,0 15,4A4,4 0 0,0 11,8A4,4 0 0,0 15,12Z"/></svg>
<svg style="position:absolute;left:1567.20px;top:311.00px" width="24" height="24" viewBox="0 0 24 24"><path fill="#222222" d="M16,12A2,2 0 0,1 18,10A2,2 0 0,1 20,12A2,2 0 0,1 18,14A2,2 0 0,1 16,12M10,12A2,2 0 0,1 12,10A2,2 0 0,1 14,12A2,2 0 0,1 12,14A2,2 0 0,1 10,12M4,12A2,2 0 0,1 6,10A2,2 0 0,1 8,12A2,2 0 0,1 6,14A2,2 0 0,1 4,12Z"/></svg>
<div class="t" style="left:1660.30px;top:312.00px;font-size:17.5px;font-weight:400;letter-spacing:-0.546px"><span style="color:#6b6b6b">330 KB</span></div>
<div class="t" style="left:1748.10px;top:312.00px;font-size:17.5px;font-weight:400;letter-spacing:0.038px"><span style="color:#6b6b6b">7 years ago</span></div>
<div style="position:absolute;left:369.00px;top:421.00px;width:1528.40px;height:2.00px;background:linear-gradient(#f1f1f1 50%,#f5f5f5 50%)"></div>
<svg style="position:absolute;left:388.95px;top:374.60px" width="28.8" height="28.8" viewBox="0 0 24 24"><path fill="#00679e" d="M10,17L5,12L6.41,10.58L10,14.17L17.59,6.58L19,8M19,3H5C3.89,3 3,3.89 3,5V19A2,2 0 0,0 5,21H19A2,2 0 0,0 21,19V5C21,3.89 20.1,3 19,3Z"/></svg>
<div style="position:absolute;left:435.8px;top:369.80px;width:38.4px;height:38.4px;border-radius:4.5px;overflow:hidden"><svg width="38.4" height="38.4" viewBox="0 0 40 40" style="background:#8a8d8b"><g filter="url(#b1)"><rect x="-2" y="-2" width="44" height="10" fill="#7d807c"/><path d="M-2,-2 H10 L6,14 H-2z" fill="#35333c"/><rect x="12" y="-2" width="30" height="4.500" fill="#dde0e0"/><circle cx="2" cy="18" r="2" fill="#6a3aa0"/><path d="M22,3 L33,3 L31,28 L18,24z" fill="#6c6f70"/><path d="M17,24 L24,9 L28,30z" fill="#2c2e30"/><path d="M0,22 L11,8 L20,7.500 L8,30 L0,29z" fill="#a85c28"/><path d="M3,22 L12,10 L17,10 L8,25z" fill="#bc6e34"/><path d="M30,9 L40,9 L40,27 L30,25z" fill="#a85626"/><path d="M32,12 L38,12 L38,24 L32,23z" fill="#b86a32"/><path d="M13,23 l5,-9 l2,8z" fill="#d8c880"/><path d="M0,30 L42,22 L42,29 L0,36z" fill="#2c2e30"/><path d="M0,34 L42,28 L42,42 L0,42z" fill="#d4d9da"/><path d="M0,37 L42,33 L42,35.500 L0,39.500z" fill="#3a3d40"/><rect x="36" y="10" width="5" height="4" fill="#c8c8cc"/></g></svg></div>
<div class="t" style="left:492.80px;top:378.00px;font-size:17.5px;font-weight:400;letter-spacing:0.202px"><span style="color:#222222">final banana bread</span><span style="color:#6b6b6b">.jpg</span></div>
<div style="position:absolute;left:1351.70px;top:370.40px;width:78.10px;height:37.60px;box-sizing:border-box;border:1.2px solid #e3e3e3;border-radius:19px;background:#fff"></div>
<div class="t" style="left:1364.30px;top:379.30px;font-size:17.5px;font-weight:400;letter-spacing:-0.443px"><span style="color:#6b6b6b">Bakery</span></div>
<div style="position:absolute;left:1437.20px;top:370.40px;width:66.20px;height:37.60px;box-sizing:border-box;border:1.2px solid #e3e3e3;border-radius:19px;background:#fff"></div>
<div class="t" style="left:1449.80px;top:379.30px;font-size:17.5px;font-weight:400;letter-spacing:0.482px"><span style="color:#6b6b6b">Food</span></div>
<svg style="position:absolute;left:1520.60px;top:377.00px" width="24" height="24" viewBox="0 0 24 24"><path fill="#222222" d="M15,14C12.33,14 7,15.33 7,18V20H23V18C23,15.33 17.67,14 15,14M6,10V7H4V10H1V12H4V15H6V12H9V10M15,12A4,4 0 0,0 19,8A4,4 0 0,0 15,4A4,4 0 0,0 11,8A4,4 0 0,0 15,12Z"/></svg>
<div style="position:absolute;left:1559.40px;top:369.00px;width:40.40px;height:40.40px;background:#f5f5f5;border-radius:9px"></div>
<svg style="position:absolute;left:1567.20px;top:377.00px" width="24" height="24" viewBox="0 0 24 24"><path fill="#222222" d="M16,12A2,2 0 0,1 18,10A2,2 0 0,1 20,12A2,2 0 0,1 18,14A2,2 0 0,1 16,12M10,12A2,2 0 0,1 12,10A2,2 0 0,1 14,12A2,2 0 0,1 12,14A2,2 0 0,1 10,12M4,12A2,2 0 0,1 6,10A2,2 0 0,1 8,12A2,2 0 0,1 6,14A2,2 0 0,1 4,12Z"/></svg>
<div class="t" style="left:1660.30px;top:378.00px;font-size:17.5px;font-weight:400;letter-spacing:-0.546px"><span style="color:#6b6b6b">836 KB</span></div>
<div class="t" style="left:1748.10px;top:378.00px;font-size:17.5px;font-weight:400;letter-spacing:0.038px"><span style="color:#6b6b6b">4 years ago</span></div>
<div style="position:absolute;left:369.00px;top:487.00px;width:1528.40px;height:2.00px;background:linear-gradient(#f1f1f1 50%,#f5f5f5 50%)"></div>
<svg style="position:absolute;left:388.95px;top:440.60px" width="28.8" height="28.8" viewBox="0 0 24 24"><path fill="#00679e" d="M19,3H5C3.89,3 3,3.89 3,5V19A2,2 0 0,0 5,21H19A2,2 0 0,0 21,19V5C21,3.89 20.1,3 19,3M19,5V19H5V5H19Z"/></svg>
<div style="position:absolute;left:435.8px;top:435.80px;width:38.4px;height:38.4px;border-radius:4.5px;overflow:hidden"><svg width="38.4" height="38.4" viewBox="0 0 40 40" style="background:#173a44"><g filter="url(#b4)"><ellipse cx="22" cy="19" rx="13" ry="14" fill="#7a9298"/></g><g filter="url(#b2)"><path d="M36,-2 L25,-2 L19,24 L29,24z" fill="#e4ecec"/><ellipse cx="8" cy="27" rx="6" ry="5" fill="#4f6a72"/><ellipse cx="33" cy="28" rx="5" ry="6" fill="#4a646c"/></g><g filter="url(#b1)"><ellipse cx="19.5" cy="22.500" rx="6.200" ry="4.400" fill="#30323a"/><rect x="14.800" y="24" width="2.800" height="8.500" fill="#30323a"/><rect x="21" y="25" width="2.800" height="7.500" fill="#30323a"/><rect x="18.200" y="24.500" width="1.300" height="6.500" fill="#b8c4c4"/><ellipse cx="14.500" cy="23" rx="2" ry="3" fill="#3a3e46"/><path d="M-2,34 H42 V42 H-2z" fill="#14262c"/><path d="M34,0 L40,12 M37,0 L33,8" stroke="#1c2c30" stroke-width=".8"/></g></svg></div>
<div class="t" style="left:492.80px;top:444.00px;font-size:17.5px;font-weight:400;letter-spacing:0.102px"><span style="color:#222222">elephant-1822636_1280</span><span style="color:#6b6b6b">.jpg</span></div>
<svg style="position:absolute;left:1520.60px;top:443.00px" width="24" height="24" viewBox="0 0 24 24"><path fill="#222222" d="M15,14C12.33,14 7,15.33 7,18V20H23V18C23,15.33 17.67,14 15,14M6,10V7H4V10H1V12H4V15H6V12H9V10M15,12A4,4 0 0,0 19,8A4,4 0 0,0 15,4A4,4 0 0,0 11,8A4,4 0 0,0 15,12Z"/></svg>
<svg style="position:absolute;left:1567.20px;top:443.00px" width="24" height="24" viewBox="0 0 24 24"><path fill="#222222" d="M16,12A2,2 0 0,1 18,10A2,2 0 0,1 20,12A2,2 0 0,1 18,14A2,2 0 0,1 16,12M10,12A2,2 0 0,1 12,10A2,2 0 0,1 14,12A2,2 0 0,1 12,14A2,2 0 0,1 10,12M4,12A2,2 0 0,1 6,10A2,2 0 0,1 8,12A2,2 0 0,1 6,14A2,2 0 0,1 4,12Z"/></svg>
<div class="t" style="left:1660.90px;top:444.00px;font-size:17.5px;font-weight:400;letter-spacing:-0.273px"><span style="color:#6b6b6b">1,2 MB</span></div>
<div class="t" style="left:1748.10px;top:444.00px;font-size:17.5px;font-weight:400;letter-spacing:0.405px"><span style="color:#6b6b6b">10 months ago</span></div>
<div style="position:absolute;left:369.00px;top:553.00px;width:1528.40px;height:2.00px;background:linear-gradient(#f1f1f1 50%,#f5f5f5 50%)"></div>
<svg style="position:absolute;left:388.95px;top:506.60px" width="28.8" height="28.8" viewBox="0 0 24 24"><path fill="#00679e" d="M19,3H5C3.89,3 3,3.89 3,5V19A2,2 0 0,0 5,21H19A2,2 0 0,0 21,19V5C21,3.89 20.1,3 19,3M19,5V19H5V5H19Z"/></svg>
<div style="position:absolute;left:435.8px;top:501.80px;width:38.4px;height:38.4px;border-radius:4.5px;overflow:hidden"><svg width="38.4" height="38.4" viewBox="0 0 40 40" style="background:#fff"><g filter="url(#b05)"><path d="M0,30.500 L12,26 L17,19 L14.500,11 L22,13 L28,17 L27,10 L29.500,2.300 L35,6 L38.700,14.600 L36,19 L38,24 L39.500,26.500 L36,28.500 L28,29 L20,29.500 L14,31z" fill="#909090"/><path d="M17,19 L14.500,11 L22,13 L28,17 L33,22 L24,24z" fill="#626262"/><path d="M28,17 L27,10 L29.500,2.300 L35,6 L38.700,14.600 L36,19 L32,20z" fill="#a4a4a4"/><path d="M29,12 L31,4 L33,12z" fill="#787878"/><circle cx="36.800" cy="24.500" r="2" fill="#3a3a3a"/><path d="M38.200,25.500 l1.600,1 l-1.800,.8z" fill="#d8a820"/><path d="M13,30.500 l.5,6.500 l2.500,-.5 l.5,-6z" fill="#b8843a"/><path d="M0,30.500 L12,26 L14,31z" fill="#a0a0a0"/></g></svg></div>
<div class="t" style="left:492.80px;top:510.00px;font-size:17.5px;font-weight:400;letter-spacing:0.194px"><span style="color:#222222">eagle</span><span style="color:#6b6b6b">.png</span></div>
<svg style="position:absolute;left:1520.60px;top:509.00px" width="24" height="24" viewBox="0 0 24 24"><path fill="#222222" d="M15,14C12.33,14 7,15.33 7,18V20H23V18C23,15.33 17.67,14 15,14M6,10V7H4V10H1V12H4V15H6V12H9V10M15,12A4,4 0 0,0 19,8A4,4 0 0,0 15,4A4,4 0 0,0 11,8A4,4 0 0,0 15,12Z"/></svg>
<svg style="position:absolute;left:1567.20px;top:509.00px" width="24" height="24" viewBox="0 0 24 24"><path fill="#222222" d="M16,12A2,2 0 0,1 18,10A2,2 0 0,1 20,12A2,2 0 0,1 18,14A2,2 0 0,1 16,12M10,12A2,2 0 0,1 12,10A2,2 0 0,1 14,12A2,2 0 0,1 12,14A2,2 0 0,1 10,12M4,12A2,2 0 0,1 6,10A2,2 0 0,1 8,12A2,2 0 0,1 6,14A2,2 0 0,1 4,12Z"/></svg>
<div class="t" style="left:1660.90px;top:510.00px;font-size:17.5px;font-weight:400;letter-spacing:-0.273px"><span style="color:#6b6b6b">1,1 MB</span></div>
<div class="t" style="left:1748.10px;top:510.00px;font-size:17.5px;font-weight:400;letter-spacing:0.038px"><span style="color:#6b6b6b">7 years ago</span></div>
<div style="position:absolute;left:369.00px;top:619.00px;width:1528.40px;height:2.00px;background:linear-gradient(#f1f1f1 50%,#f5f5f5 50%)"></div>
<svg style="position:absolute;left:388.95px;top:572.60px" width="28.8" height="28.8" viewBox="0 0 24 24"><path fill="#00679e" d="M10,17L5,12L6.41,10.58L10,14.17L17.59,6.58L19,8M19,3H5C3.89,3 3,3.89 3,5V19A2,2 0 0,0 5,21H19A2,2 0 0,0 21,19V5C21,3.89 20.1,3 19,3Z"/></svg>
<div style="position:absolute;left:435.8px;top:567.80px;width:38.4px;height:38.4px;border-radius:4.5px;overflow:hidden"><svg width="38.4" height="38.4" viewBox="0 0 40 40" style="background:#101c18"><g filter="url(#b2)"><rect x="6" y="-3" width="36" height="9" fill="#2c5c26"/><ellipse cx="9" cy="30" rx="5" ry="3" fill="#1c3c20"/><path d="M8,6 C16,0 30,2 36,10 C42,18 42,30 42,42 L17,42 C19,32 16,24 14,20 C10,18 8,12 8,6z" fill="#66523a"/><ellipse cx="30" cy="30" rx="8" ry="10" fill="#7e6c54"/><path d="M16,8 C22,5 30,8 34,14" stroke="#8a7a62" stroke-width="3" fill="none"/><path d="M24,20 L36,40 M20,24 L26,40" stroke="#3c2e22" stroke-width="1.600"/></g><g filter="url(#b1)"><path d="M1,19 C2,13 7,9.500 13,10.500 C15.500,12 16,15 14.500,17.500 C10,17 5,19 2.500,23 C1.500,22 1,20.500 1,19z" fill="#e2b224"/><path d="M13,10.500 C15.500,12 16,15 14.500,17.500 L18,14z" fill="#d8c070"/><ellipse cx="20" cy="9" rx="2.500" ry="1.400" fill="#2a2018"/><path d="M17,42 L19,32 L23,42z" fill="#e8e4d8"/></g></svg></div>
<div class="t" style="left:492.80px;top:576.00px;font-size:17.5px;font-weight:400;letter-spacing:0.175px"><span style="color:#222222">eagle</span><span style="color:#6b6b6b">.jpg</span></div>
<svg style="position:absolute;left:1520.60px;top:575.00px" width="24" height="24" viewBox="0 0 24 24"><path fill="#222222" d="M15,14C12.33,14 7,15.33 7,18V20H23V18C23,15.33 17.67,14 15,14M6,10V7H4V10H1V12H4V15H6V12H9V10M15,12A4,4 0 0,0 19,8A4,4 0 0,0 15,4A4,4 0 0,0 11,8A4,4 0 0,0 15,12Z"/></svg>
<svg style="position:absolute;left:1567.20px;top:575.00px" width="24" height="24" viewBox="0 0 24 24"><path fill="#222222" d="M16,12A2,2 0 0,1 18,10A2,2 0 0,1 20,12A2,2 0 0,1 18,14A2,2 0 0,1 16,12M10,12A2,2 0 0,1 12,10A2,2 0 0,1 14,12A2,2 0 0,1 12,14A2,2 0 0,1 10,12M4,12A2,2 0 0,1 6,10A2,2 0 0,1 8,12A2,2 0 0,1 6,14A2,2 0 0,1 4,12Z"/></svg>
<div class="t" style="left:1660.90px;top:576.00px;font-size:17.5px;font-weight:400;letter-spacing:-0.273px"><span style="color:#6b6b6b">1,2 MB</span></div>
<div class="t" style="left:1748.10px;top:576.00px;font-size:17.5px;font-weight:400;letter-spacing:0.038px"><span style="color:#6b6b6b">7 years ago</span></div>
<div style="position:absolute;left:369.00px;top:620.00px;width:1528.40px;height:66.00px;background:#f5f5f5"></div>
<div style="position:absolute;left:369.00px;top:685.00px;width:1528.40px;height:2.00px;background:linear-gradient(#f1f1f1 50%,#f5f5f5 50%)"></div>
<svg style="position:absolute;left:388.95px;top:638.60px" width="28.8" height="28.8" viewBox="0 0 24 24"><path fill="#00679e" d="M10,17L5,12L6.41,10.58L10,14.17L17.59,6.58L19,8M19,3H5C3.89,3 3,3.89 3,5V19A2,2 0 0,0 5,21H19A2,2 0 0,0 21,19V5C21,3.89 20.1,3 19,3Z"/></svg>
<div style="position:absolute;left:435.8px;top:633.80px;width:38.4px;height:38.4px;border-radius:4.5px;overflow:hidden"><svg width="38.4" height="38.4" viewBox="0 0 40 40" style="background:#30103c"><g filter="url(#b1)"><path d="M0,0 H40 V12 C28,10 18,2 0,6z" fill="#c40c48"/><path d="M28,0 H40 V10 C36,8 32,4 28,0z" fill="#d41420"/><path d="M0,4 C14,2 26,8 40,9 V13 C26,12 14,5 0,7z" fill="#3a0a28"/><path d="M0,7 C16,6 26,16 40,16 V21 C26,21 14,10 0,11z" fill="#c8186a"/><path d="M0,10.500 C14,10 26,20 40,20 V24 C24,24 14,14 0,14.500z" fill="#c860c0"/><path d="M0,14 C14,14 24,24 40,24 V28 C24,28 14,18 0,18z" fill="#6c2e9c"/><path d="M0,18 C14,18 24,27 40,28 V33 C24,32 14,22 0,22z" fill="#1c0a3c"/><path d="M0,22 C12,22 22,30 32,32 L30,35 C20,33 12,26 0,26z" fill="#2a5cd0"/><path d="M0,27 C10,27 18,33 30,37 L28,40 C18,37 10,31 0,31z" fill="#34a4f0"/><path d="M30,22 C34,22 38,23 40,24 V32 C36,31 32,29 28,26z" fill="#9a9a24"/><path d="M0,31 C8,31 16,36 24,40 H0z" fill="#2c9c50"/><path d="M24,33 C30,35 36,36 40,36 V40 H26z" fill="#240a20"/></g></svg></div>
<div class="t" style="left:492.80px;top:642.00px;font-size:17.5px;font-weight:400;letter-spacing:0.205px"><span style="color:#222222">colors</span><span style="color:#222222">.jpeg</span></div>
<svg style="position:absolute;left:1520.60px;top:641.00px" width="24" height="24" viewBox="0 0 24 24"><path fill="#222222" d="M15,14C12.33,14 7,15.33 7,18V20H23V18C23,15.33 17.67,14 15,14M6,10V7H4V10H1V12H4V15H6V12H9V10M15,12A4,4 0 0,0 19,8A4,4 0 0,0 15,4A4,4 0 0,0 11,8A4,4 0 0,0 15,12Z"/></svg>
<svg style="position:absolute;left:1567.20px;top:641.00px" width="24" height="24" viewBox="0 0 24 24"><path fill="#222222" d="M16,12A2,2 0 0,1 18,10A2,2 0 0,1 20,12A2,2 0 0,1 18,14A2,2 0 0,1 16,12M10,12A2,2 0 0,1 12,10A2,2 0 0,1 14,12A2,2 0 0,1 12,14A2,2 0 0,1 10,12M4,12A2,2 0 0,1 6,10A2,2 0 0,1 8,12A2,2 0 0,1 6,14A2,2 0 0,1 4,12Z"/></svg>
<div class="t" style="left:1660.90px;top:642.00px;font-size:17.5px;font-weight:400;letter-spacing:-0.273px"><span style="color:#222222">1,7 MB</span></div>
<div class="t" style="left:1748.10px;top:642.00px;font-size:17.5px;font-weight:400;letter-spacing:0.038px"><span style="color:#222222">6 years ago</span></div>
<div style="position:absolute;left:369.00px;top:751.00px;width:1528.40px;height:2.00px;background:linear-gradient(#f1f1f1 50%,#f5f5f5 50%)"></div>
<svg style="position:absolute;left:388.95px;top:704.60px" width="28.8" height="28.8" viewBox="0 0 24 24"><path fill="#00679e" d="M19,3H5C3.89,3 3,3.89 3,5V19A2,2 0 0,0 5,21H19A2,2 0 0,0 21,19V5C21,3.89 20.1,3 19,3M19,5V19H5V5H19Z"/></svg>
<div style="position:absolute;left:435.8px;top:699.80px;width:38.4px;height:38.4px;border-radius:4.5px;overflow:hidden"><svg width="38.4" height="38.4" viewBox="0 0 40 40" style="background:#a8682a"><g filter="url(#b1)"><rect x="-2" y="-2" width="44" height="44" fill="#a8682a"/><ellipse cx="8" cy="8" rx="8" ry="6" fill="#b8782e"/><ellipse cx="34" cy="12" rx="7" ry="8" fill="#b47a36"/><ellipse cx="8" cy="34" rx="9" ry="6" fill="#94541e"/><path d="M2,10 L20,2 M24,0 L32,10 L40,4 M30,30 L36,40 M0,24 L6,30" stroke="#4a2a10" stroke-width="1" fill="none"/><path d="M30,30 L42,26 L42,42 L32,42z" fill="#3a1e0e"/><path d="M33,10 L38,28" stroke="#c8c8c8" stroke-width="1.100"/><ellipse cx="34" cy="10" rx="1.600" ry="2.400" fill="#d8d8d8"/></g><g filter="url(#b05)"><circle cx="17" cy="21.500" r="12.200" fill="#ece8e0"/><circle cx="17" cy="21" r="8.600" fill="#f8f6f2"/><circle cx="16.500" cy="21" r="7.200" fill="#5a3018"/><circle cx="16.500" cy="21" r="5.400" fill="#180c08"/><path d="M24,16 C28,18 28,26 23,29" stroke="#7a2a1a" stroke-width="1.600" fill="none"/></g></svg></div>
<div class="t" style="left:492.80px;top:708.00px;font-size:17.5px;font-weight:400;letter-spacing:0.318px"><span style="color:#222222">coffee</span><span style="color:#6b6b6b">.jpg</span></div>
<svg style="position:absolute;left:1520.60px;top:707.00px" width="24" height="24" viewBox="0 0 24 24"><path fill="#222222" d="M15,14C12.33,14 7,15.33 7,18V20H23V18C23,15.33 17.67,14 15,14M6,10V7H4V10H1V12H4V15H6V12H9V10M15,12A4,4 0 0,0 19,8A4,4 0 0,0 15,4A4,4 0 0,0 11,8A4,4 0 0,0 15,12Z"/></svg>
<svg style="position:absolute;left:1567.20px;top:707.00px" width="24" height="24" viewBox="0 0 24 24"><path fill="#222222" d="M16,12A2,2 0 0,1 18,10A2,2 0 0,1 20,12A2,2 0 0,1 18,14A2,2 0 0,1 16,12M10,12A2,2 0 0,1 12,10A2,2 0 0,1 14,12A2,2 0 0,1 12,14A2,2 0 0,1 10,12M4,12A2,2 0 0,1 6,10A2,2 0 0,1 8,12A2,2 0 0,1 6,14A2,2 0 0,1 4,12Z"/></svg>
<div class="t" style="left:1660.90px;top:708.00px;font-size:17.5px;font-weight:400;letter-spacing:-0.273px"><span style="color:#6b6b6b">1,4 MB</span></div>
<div class="t" style="left:1748.10px;top:708.00px;font-size:17.5px;font-weight:400;letter-spacing:0.038px"><span style="color:#6b6b6b">7 years ago</span></div>
<div style="position:absolute;left:369.00px;top:817.00px;width:1528.40px;height:2.00px;background:linear-gradient(#f1f1f1 50%,#f5f5f5 50%)"></div>
<svg style="position:absolute;left:388.95px;top:770.60px" width="28.8" height="28.8" viewBox="0 0 24 24"><path fill="#00679e" d="M19,3H5C3.89,3 3,3.89 3,5V19A2,2 0 0,0 5,21H19A2,2 0 0,0 21,19V5C21,3.89 20.1,3 19,3M19,5V19H5V5H19Z"/></svg>
<div style="position:absolute;left:435.8px;top:765.80px;width:38.4px;height:38.4px;border-radius:4.5px;overflow:hidden"><svg width="38.4" height="38.4" viewBox="0 0 40 40" style="background:#a9aba8"><g filter="url(#b1)"><rect x="-2" y="-2" width="44" height="9" fill="#8c8e8c"/><rect x="2" y="0" width="3" height="6" fill="#d8dad8"/><rect x="9" y="0" width="3" height="6" fill="#d8dad8"/><rect x="16" y="0" width="3" height="6" fill="#d8dad8"/><rect x="28" y="1" width="8" height="5" fill="#d0d2d0"/><ellipse cx="20" cy="8" rx="3" ry="3" fill="#4a5048"/><path d="M2,18 C3,12 8,9 13,9 C18,9 22,13 22,18 L24,40 L3,40z" fill="#4c2c2a"/><ellipse cx="12" cy="12" rx="5" ry="3" fill="#3a2220"/><rect x="31" y="16" width="5.500" height="26" fill="#34363a"/><rect x="36.500" y="14" width="5" height="28" fill="#e8eae8"/><rect x="24" y="28" width="7" height="14" fill="#d8dadc"/><rect x="26" y="16" width="3" height="20" fill="#787a7c"/><circle cx="33" cy="12" r="1.300" fill="#c02838"/></g></svg></div>
<div class="t" style="left:492.80px;top:774.00px;font-size:17.5px;font-weight:400;letter-spacing:0.201px"><span style="color:#222222">Chocolate</span><span style="color:#6b6b6b">.jpg</span></div>
<div style="position:absolute;left:1345.50px;top:766.40px;width:84.50px;height:37.60px;box-sizing:border-box;border:1.2px solid #e3e3e3;border-radius:19px;background:#fff"></div>
<div class="t" style="left:1358.10px;top:775.30px;font-size:17.5px;font-weight:400;letter-spacing:-0.255px"><span style="color:#6b6b6b">Dessert</span></div>
<div style="position:absolute;left:1437.20px;top:766.40px;width:66.20px;height:37.60px;box-sizing:border-box;border:1.2px solid #e3e3e3;border-radius:19px;background:#fff"></div>
<div class="t" style="left:1450.80px;top:775.30px;font-size:17.5px;font-weight:400;letter-spacing:-1.200px"><span style="color:#6b6b6b">Sweet</span></div>
<svg style="position:absolute;left:1520.60px;top:773.00px" width="24" height="24" viewBox="0 0 24 24"><path fill="#222222" d="M15,14C12.33,14 7,15.33 7,18V20H23V18C23,15.33 17.67,14 15,14M6,10V7H4V10H1V12H4V15H6V12H9V10M15,12A4,4 0 0,0 19,8A4,4 0 0,0 15,4A4,4 0 0,0 11,8A4,4 0 0,0 15,12Z"/></svg>
<svg style="position:absolute;left:1567.20px;top:773.00px" width="24" height="24" viewBox="0 0 24 24"><path fill="#222222" d="M16,12A2,2 0 0,1 18,10A2,2 0 0,1 20,12A2,2 0 0,1 18,14A2,2 0 0,1 16,12M10,12A2,2 0 0,1 12,10A2,2 0 0,1 14,12A2,2 0 0,1 12,14A2,2 0 0,1 10,12M4,12A2,2 0 0,1 6,10A2,2 0 0,1 8,12A2,2 0 0,1 6,14A2,2 0 0,1 4,12Z"/></svg>
<div class="t" style="left:1660.90px;top:774.00px;font-size:17.5px;font-weight:400;letter-spacing:-0.273px"><span style="color:#6b6b6b">1,5 MB</span></div>
<div class="t" style="left:1748.10px;top:774.00px;font-size:17.5px;font-weight:400;letter-spacing:-0.051px"><span style="color:#6b6b6b">last year</span></div>
<div style="position:absolute;left:369.00px;top:883.00px;width:1528.40px;height:2.00px;background:linear-gradient(#f1f1f1 50%,#f5f5f5 50%)"></div>
<svg style="position:absolute;left:388.95px;top:836.60px" width="28.8" height="28.8" viewBox="0 0 24 24"><path fill="#00679e" d="M19,3H5C3.89,3 3,3.89 3,5V19A2,2 0 0,0 5,21H19A2,2 0 0,0 21,19V5C21,3.89 20.1,3 19,3M19,5V19H5V5H19Z"/></svg>
<svg style="position:absolute;left:438.00px;top:834.00px;" width="34" height="34" viewBox="438 834 34 34"><rect x="440.7" y="836.6" width="28.6" height="28.3" rx="3.2" fill="#969696"/><circle cx="449.4" cy="845.4" r="2.7" fill="#fff"/><path d="M445.2,859.2 L450.3,852.5 L453.5,856.9 L458.5,850.6 L464.7,859.2z" fill="#fff"/></svg>
<div class="t" style="left:492.80px;top:840.00px;font-size:17.5px;font-weight:400;letter-spacing:0.154px"><span style="color:#222222">calendar icon-new</span><span style="color:#6b6b6b">.svg</span></div>
<svg style="position:absolute;left:1520.60px;top:839.00px" width="24" height="24" viewBox="0 0 24 24"><path fill="#222222" d="M15,14C12.33,14 7,15.33 7,18V20H23V18C23,15.33 17.67,14 15,14M6,10V7H4V10H1V12H4V15H6V12H9V10M15,12A4,4 0 0,0 19,8A4,4 0 0,0 15,4A4,4 0 0,0 11,8A4,4 0 0,0 15,12Z"/></svg>
<svg style="position:absolute;left:1567.20px;top:839.00px" width="24" height="24" viewBox="0 0 24 24"><path fill="#222222" d="M16,12A2,2 0 0,1 18,10A2,2 0 0,1 20,12A2,2 0 0,1 18,14A2,2 0 0,1 16,12M10,12A2,2 0 0,1 12,10A2,2 0 0,1 14,12A2,2 0 0,1 12,14A2,2 0 0,1 10,12M4,12A2,2 0 0,1 6,10A2,2 0 0,1 8,12A2,2 0 0,1 6,14A2,2 0 0,1 4,12Z"/></svg>
<div class="t" style="left:1660.90px;top:840.00px;font-size:17.5px;font-weight:400;letter-spacing:0.308px"><span style="color:#6b6b6b">1,2 KB</span></div>
<div class="t" style="left:1748.10px;top:840.00px;font-size:17.5px;font-weight:400;letter-spacing:0.087px"><span style="color:#6b6b6b">2 weeks ago</span></div>
<div style="position:absolute;left:369.00px;top:949.00px;width:1528.40px;height:2.00px;background:linear-gradient(#f1f1f1 50%,#f5f5f5 50%)"></div>
<svg style="position:absolute;left:388.95px;top:902.60px" width="28.8" height="28.8" viewBox="0 0 24 24"><path fill="#00679e" d="M19,3H5C3.89,3 3,3.89 3,5V19A2,2 0 0,0 5,21H19A2,2 0 0,0 21,19V5C21,3.89 20.1,3 19,3M19,5V19H5V5H19Z"/></svg>
<div style="position:absolute;left:435.8px;top:897.80px;width:38.4px;height:38.4px;border-radius:4.5px;overflow:hidden"><svg width="38.4" height="38.4" viewBox="0 0 40 40" style="background:#a8703c"><g filter="url(#b1)"><rect x="-2" y="-2" width="44" height="44" fill="#a8703c"/><path d="M-2,-2 H42 V6 H-2z" fill="#4a5654"/><ellipse cx="13" cy="7" rx="8" ry="5.500" fill="#d0d6da"/><ellipse cx="15" cy="4" rx="3" ry="2.500" fill="#2a2e30"/><ellipse cx="31" cy="6" rx="5.500" ry="5" fill="#4a78c0"/><ellipse cx="29" cy="5" rx="3" ry="2.400" fill="#c89878"/><rect x="20" y="10" width="14" height="2.400" fill="#d8d8c8"/><rect x="26" y="12" width="4" height="5" fill="#d0d4c8"/><ellipse cx="4" cy="20" rx="5" ry="6" fill="#e0dcd4"/><rect x="16" y="22" width="6" height="5" fill="#f4f4f4"/><rect x="30" y="20" width="7" height="6" fill="#3a68b0"/><rect x="32" y="25" width="5" height="3" fill="#e8e8ec"/><ellipse cx="17" cy="35" rx="6.500" ry="6" fill="#d494a4"/><ellipse cx="18" cy="30" rx="3" ry="2.400" fill="#5a3a30"/><ellipse cx="34" cy="35" rx="7" ry="8" fill="#dfe3ee"/><path d="M-2,30 L8,30 L10,42 L-2,42z" fill="#eef0f0"/><rect x="24" y="34" width="5" height="8" fill="#5a6a64"/><path d="M0,32 L10,42" stroke="#4a524e" stroke-width="1.400"/><circle cx="10" cy="15" r="1.200" fill="#e8e8e8"/><circle cx="13" cy="25" r="1" fill="#3a5a3a"/><circle cx="24" cy="18" r="1.200" fill="#e8e4d8"/></g></svg></div>
<div class="t" style="left:492.80px;top:906.00px;font-size:17.5px;font-weight:400;letter-spacing:0.518px"><span style="color:#222222">business-is-looking-good-shot-group-people-working-office</span><span style="color:#6b6b6b">.jpg</span></div>
<svg style="position:absolute;left:1520.60px;top:905.00px" width="24" height="24" viewBox="0 0 24 24"><path fill="#222222" d="M15,14C12.33,14 7,15.33 7,18V20H23V18C23,15.33 17.67,14 15,14M6,10V7H4V10H1V12H4V15H6V12H9V10M15,12A4,4 0 0,0 19,8A4,4 0 0,0 15,4A4,4 0 0,0 11,8A4,4 0 0,0 15,12Z"/></svg>
<svg style="position:absolute;left:1567.20px;top:905.00px" width="24" height="24" viewBox="0 0 24 24"><path fill="#222222" d="M16,12A2,2 0 0,1 18,10A2,2 0 0,1 20,12A2,2 0 0,1 18,14A2,2 0 0,1 16,12M10,12A2,2 0 0,1 12,10A2,2 0 0,1 14,12A2,2 0 0,1 12,14A2,2 0 0,1 10,12M4,12A2,2 0 0,1 6,10A2,2 0 0,1 8,12A2,2 0 0,1 6,14A2,2 0 0,1 4,12Z"/></svg>
<div class="t" style="left:1660.90px;top:906.00px;font-size:17.5px;font-weight:400;letter-spacing:-0.273px"><span style="color:#6b6b6b">1,6 MB</span></div>
<div class="t" style="left:1748.10px;top:906.00px;font-size:17.5px;font-weight:400;letter-spacing:-0.051px"><span style="color:#6b6b6b">last year</span></div>
<div style="position:absolute;left:369.00px;top:1015.00px;width:1528.40px;height:2.00px;background:linear-gradient(#f1f1f1 50%,#f5f5f5 50%)"></div>
<svg style="position:absolute;left:388.95px;top:968.60px" width="28.8" height="28.8" viewBox="0 0 24 24"><path fill="#00679e" d="M19,3H5C3.89,3 3,3.89 3,5V19A2,2 0 0,0 5,21H19A2,2 0 0,0 21,19V5C21,3.89 20.1,3 19,3M19,5V19H5V5H19Z"/></svg>
<div style="position:absolute;left:435.8px;top:963.80px;width:38.4px;height:38.4px;border-radius:4.5px;overflow:hidden"><svg width="38.4" height="38.4" viewBox="0 0 40 40" style="background:#1450e4"><g filter="url(#b1)"><rect x="-2" y="-2" width="44" height="9" fill="#4c4a18"/><ellipse cx="5" cy="4" rx="2.400" ry="1.300" fill="#e08a10"/><ellipse cx="28" cy="2" rx="8" ry="2" fill="#3a4a14"/><path d="M-2,16 C2,14 6,12 9,8 C14,5 26,4.500 34,5.500 L42,5 V36 H-2z" fill="#1450e4"/><path d="M9,9 C15,6.500 25,6 33,7 L35,14 C26,13 14,14 5,16z" fill="#2244a8"/><path d="M36,7 L42,6 V16 L37,15z" fill="#2a4a9c"/><path d="M-2,17 C8,15 20,16 30,18 L30,21 C20,19 8,19 -2,21z" fill="#2a6cf4"/><rect x="-1" y="21" width="15" height="4.200" rx="1.500" fill="#0c0e14"/><path d="M15,21.500 L25,20.500 L24,23.500 L16,24z" fill="#d4dcd4"/><rect x="-1" y="26.300" width="10" height="2.800" fill="#f4f4f4"/><path d="M-2,31 H30 V35.500 H-2z" fill="#0e1834"/><ellipse cx="29.500" cy="29" rx="4.600" ry="7" fill="#0a0c12"/><rect x="-2" y="35.500" width="44" height="7" fill="#b0a6a8"/><rect x="8" y="13" width="2.400" height="3" fill="#2a6cf4"/></g></svg></div>
<div class="t" style="left:492.80px;top:972.00px;font-size:17.5px;font-weight:400;letter-spacing:0.572px"><span style="color:#222222">bmw</span><span style="color:#6b6b6b">.jpeg</span></div>
<svg style="position:absolute;left:1520.60px;top:971.00px" width="24" height="24" viewBox="0 0 24 24"><path fill="#222222" d="M15,14C12.33,14 7,15.33 7,18V20H23V18C23,15.33 17.67,14 15,14M6,10V7H4V10H1V12H4V15H6V12H9V10M15,12A4,4 0 0,0 19,8A4,4 0 0,0 15,4A4,4 0 0,0 11,8A4,4 0 0,0 15,12Z"/></svg>
<svg style="position:absolute;left:1567.20px;top:971.00px" width="24" height="24" viewBox="0 0 24 24"><path fill="#222222" d="M16,12A2,2 0 0,1 18,10A2,2 0 0,1 20,12A2,2 0 0,1 18,14A2,2 0 0,1 16,12M10,12A2,2 0 0,1 12,10A2,2 0 0,1 14,12A2,2 0 0,1 12,14A2,2 0 0,1 10,12M4,12A2,2 0 0,1 6,10A2,2 0 0,1 8,12A2,2 0 0,1 6,14A2,2 0 0,1 4,12Z"/></svg>
<div class="t" style="left:1661.90px;top:972.00px;font-size:17.5px;font-weight:400;letter-spacing:-0.473px"><span style="color:#6b6b6b">3,1 MB</span></div>
<div class="t" style="left:1748.10px;top:972.00px;font-size:17.5px;font-weight:400;letter-spacing:0.038px"><span style="color:#6b6b6b">6 years ago</span></div>
<div style="position:absolute;left:369.00px;top:1081.00px;width:1528.40px;height:2.00px;background:linear-gradient(#f1f1f1 50%,#f5f5f5 50%)"></div>
<svg style="position:absolute;left:388.95px;top:1034.60px" width="28.8" height="28.8" viewBox="0 0 24 24"><path fill="#00679e" d="M19,3H5C3.89,3 3,3.89 3,5V19A2,2 0 0,0 5,21H19A2,2 0 0,0 21,19V5C21,3.89 20.1,3 19,3M19,5V19H5V5H19Z"/></svg>
<div style="position:absolute;left:435.8px;top:1029.80px;width:38.4px;height:38.4px;border-radius:4.5px;overflow:hidden"><svg width="38.4" height="38.4" viewBox="0 0 40 40" style="background:#c6ccd6"><g filter="url(#b1)"><rect x="-2" y="-2" width="44" height="6" fill="#f0f2f4"/><path d="M-2,4 C6,2.500 12,3 18,2 C24,0 30,1 34,4 L42,5 V7 H-2z" fill="#5c6c70"/><rect x="-2" y="6.500" width="44" height="17" fill="#c6ccd6"/><rect x="-2" y="20" width="44" height="22" fill="#56645c"/><ellipse cx="32" cy="26" rx="10" ry="6" fill="#9aa4ac"/><rect x="14" y="2" width="6" height="9.500" rx="2" fill="#a8a47a"/><circle cx="17.500" cy="1.500" r="1.500" fill="#b04a30"/><rect x="14.500" y="11" width="6" height="5.500" fill="#28282c"/><path d="M3,18 C8,15 18,15.500 26,14 L27,16 C20,19 10,21 4,20.500z" fill="#e8e8e8"/><ellipse cx="12" cy="17.300" rx="5.500" ry="1.500" fill="#2ca4b4"/><path d="M22,12 L33,14" stroke="#d86a5a" stroke-width=".8"/><path d="M30,13 L36,14.500 L35,16 L30,14.500z" fill="#5a5a50"/><path d="M1,42 C3,30 10,23 19,23 C28,23 35,31 37,42z" fill="#dcc474"/><path d="M6,34 C14,31 24,31 32,34 M9,29 C15,27 23,27 29,29 M4,38 C14,36 26,36 35,38" stroke="#c89c50" stroke-width=".9" fill="none"/><rect x="14" y="35" width="10" height="3" rx="1.500" fill="#3a3a3c"/><rect x="15.500" y="35.800" width="7" height="1.400" fill="#d8d8d8"/></g></svg></div>
<div class="t" style="left:492.80px;top:1038.00px;font-size:17.5px;font-weight:400;letter-spacing:0.494px"><span style="color:#222222">beautiful-shot-male-sitting-paddleboard-holding-oar-with-mountains (1)</span><span style="color:#6b6b6b">.jpg</span></div>
<svg style="position:absolute;left:1520.60px;top:1037.00px" width="24" height="24" viewBox="0 0 24 24"><path fill="#222222" d="M15,14C12.33,14 7,15.33 7,18V20H23V18C23,15.33 17.67,14 15,14M6,10V7H4V10H1V12H4V15H6V12H9V10M15,12A4,4 0 0,0 19,8A4,4 0 0,0 15,4A4,4 0 0,0 11,8A4,4 0 0,0 15,12Z"/></svg>
<svg style="position:absolute;left:1567.20px;top:1037.00px" width="24" height="24" viewBox="0 0 24 24"><path fill="#222222" d="M16,12A2,2 0 0,1 18,10A2,2 0 0,1 20,12A2,2 0 0,1 18,14A2,2 0 0,1 16,12M10,12A2,2 0 0,1 12,10A2,2 0 0,1 14,12A2,2 0 0,1 12,14A2,2 0 0,1 10,12M4,12A2,2 0 0,1 6,10A2,2 0 0,1 8,12A2,2 0 0,1 6,14A2,2 0 0,1 4,12Z"/></svg>
<div class="t" style="left:1660.90px;top:1038.00px;font-size:17.5px;font-weight:400;letter-spacing:-0.273px"><span style="color:#6b6b6b">1,8 MB</span></div>
<div class="t" style="left:1748.10px;top:1038.00px;font-size:17.5px;font-weight:400;letter-spacing:0.405px"><span style="color:#6b6b6b">10 months ago</span></div>
</div>
<div style="position:absolute;left:1899.80px;top:684.00px;width:8.20px;height:236.00px;background:#d9d9d9"></div>
<div style="position:absolute;left:0;top:0;width:1920px;height:1080px;filter:drop-shadow(0 1.2px 8px rgba(77,77,77,.46))"><div style="position:absolute;left:1445px;top:421px;width:267.6px;height:458.6px;border-radius:11px;background:#fff"></div><svg style="position:absolute;left:1564px;top:409.5px" width="32" height="13" viewBox="0 0 32 13"><path d="M3.5,13 L16,0.8 L28.5,13z" fill="#fff"/></svg></div>
<div style="position:absolute;left:1449.80px;top:426.00px;width:258.40px;height:40.80px;background:#f5f5f5;border-radius:8px"></div>
<svg style="position:absolute;left:1457.80px;top:434.40px" width="24" height="24" viewBox="0 0 24 24"><path fill="#222222" d="M12,15.39L8.24,17.66L9.23,13.38L5.91,10.5L10.29,10.13L12,6.09L13.71,10.13L18.09,10.5L14.77,13.38L15.76,17.66M22,9.24L14.81,8.63L12,2L9.19,8.63L2,9.24L7.45,13.97L5.82,21L12,17.27L18.18,21L16.54,13.97L22,9.24Z"/></svg>
<div class="t" style="left:1491.20px;top:435.80px;font-size:17.5px;font-weight:400;letter-spacing:0.277px"><span style="color:#222">Add to favorites</span></div>
<svg style="position:absolute;left:1457.80px;top:475.20px" width="24" height="24" viewBox="0 0 24 24"><path fill="#222222" d="M13.5,4A1.5,1.5 0 0,0 12,5.5A1.5,1.5 0 0,0 13.5,7A1.5,1.5 0 0,0 15,5.5A1.5,1.5 0 0,0 13.5,4M13.14,8.77C11.95,8.87 8.7,11.46 8.7,11.46C8.5,11.61 8.56,11.6 8.72,11.88C8.88,12.15 8.86,12.17 9.05,12.04C9.25,11.91 9.58,11.7 10.13,11.36C12.25,10 10.47,13.14 9.56,18.43C9.2,21.05 11.56,19.7 12.17,19.3C12.77,18.91 14.38,17.8 14.54,17.69C14.76,17.54 14.6,17.42 14.43,17.17C14.31,17 14.19,17.12 14.19,17.12C13.54,17.55 12.35,18.45 12.19,17.88C12,17.31 13.22,13.4 13.89,10.71C14,10.07 14.3,8.67 13.14,8.77Z"/></svg>
<div class="t" style="left:1491.20px;top:476.60px;font-size:17.5px;font-weight:400;letter-spacing:0.045px"><span style="color:#222">Open details</span></div>
<svg style="position:absolute;left:1458.00px;top:514.00px;" width="24" height="28" viewBox="1458 514 24 28"><path fill="#222222" fill-rule="evenodd" d="M1462.3,517.8h11.2l5.6,4.6v14.9a1,1 0 0 1 -1,1h-15.8a1,1 0 0 1 -1,-1v-18.500a1,1 0 0 1 1,-1zM1464,520.8h9.1v1.5h-9.100z M1464,525.2h7.7v1.5h-7.700z M1464,529.6h12.1v1.5h-12.100z M1464,534h6.2v1.5h-6.200z"/></svg>
<div class="t" style="left:1491.20px;top:517.40px;font-size:17.5px;font-weight:400;letter-spacing:0.314px"><span style="color:#222">Edit with Nextcloud Office</span></div>
<svg style="position:absolute;left:1457.80px;top:556.80px" width="24" height="24" viewBox="0 0 24 24"><path fill="#222222" d="M12,9A3,3 0 0,0 9,12A3,3 0 0,0 12,15A3,3 0 0,0 15,12A3,3 0 0,0 12,9M12,17A5,5 0 0,1 7,12A5,5 0 0,1 12,7A5,5 0 0,1 17,12A5,5 0 0,1 12,17M12,4.5C7,4.5 2.73,7.61 1,12C2.73,16.39 7,19.5 12,19.5C17,19.5 21.27,16.39 23,12C21.27,7.61 17,4.5 12,4.5Z"/></svg>
<div class="t" style="left:1491.20px;top:558.20px;font-size:17.5px;font-weight:400;letter-spacing:-0.292px"><span style="color:#222">View</span></div>
<svg style="position:absolute;left:1457.80px;top:597.60px" width="24" height="24" viewBox="0 0 24 24"><path fill="#222222" d="M20.71,7.04C21.1,6.65 21.1,6 20.71,5.63L18.37,3.29C18,2.9 17.35,2.9 16.96,3.29L15.12,5.12L18.87,8.87M3,17.25V21H6.75L17.81,9.93L14.06,6.18L3,17.25Z"/></svg>
<div class="t" style="left:1491.20px;top:599.00px;font-size:17.5px;font-weight:400;letter-spacing:-0.523px"><span style="color:#222">Rename</span></div>
<svg style="position:absolute;left:1457.80px;top:638.40px" width="24" height="24" viewBox="0 0 24 24"><path fill="#222222" d="M14,18V15H10V11H14V8L19,13M20,6H12L10,4H4C2.89,4 2,4.89 2,6V18A2,2 0 0,0 4,20H20A2,2 0 0,0 22,18V8C22,6.89 21.1,6 20,6Z"/></svg>
<div class="t" style="left:1491.20px;top:639.80px;font-size:17.5px;font-weight:400;letter-spacing:0.310px"><span style="color:#222">Move or copy</span></div>
<svg style="position:absolute;left:1457.80px;top:679.20px" width="24" height="24" viewBox="0 0 24 24"><path fill="#222222" d="M12,20A7,7 0 0,1 5,13A7,7 0 0,1 12,6A7,7 0 0,1 19,13A7,7 0 0,1 12,20M12,4A9,9 0 0,0 3,13A9,9 0 0,0 12,22A9,9 0 0,0 21,13A9,9 0 0,0 12,4M12.5,8H11V14L15.75,16.85L16.5,15.62L12.5,13.25V8M7.88,3.39L6.6,1.86L2,5.71L3.29,7.24L7.88,3.39M22,5.72L17.4,1.86L16.11,3.39L20.71,7.25L22,5.72Z"/></svg>
<div class="t" style="left:1491.20px;top:680.60px;font-size:17.5px;font-weight:400;letter-spacing:0.095px"><span style="color:#222">Set reminder</span></div>
<svg style="position:absolute;left:1675.30px;top:679.20px" width="24" height="24" viewBox="0 0 24 24"><path fill="#222222" d="M8.59,16.58L13.17,12L8.59,7.41L10,6L16,12L10,18L8.59,16.58Z"/></svg>
<svg style="position:absolute;left:1457.80px;top:720.00px" width="24" height="24" viewBox="0 0 24 24"><path fill="#222222" d="M4,6H20V16H4M20,18A2,2 0 0,0 22,16V6C22,4.89 21.1,4 20,4H4C2.89,4 2,4.89 2,6V16A2,2 0 0,0 4,18H0V20H24V18H20Z"/></svg>
<div class="t" style="left:1491.20px;top:721.40px;font-size:17.5px;font-weight:400;letter-spacing:0.019px"><span style="color:#222">Edit locally</span></div>
<svg style="position:absolute;left:1457.80px;top:760.80px" width="24" height="24" viewBox="0 0 24 24"><path fill="#222222" d="M12,17A2,2 0 0,0 14,15C14,13.89 13.1,13 12,13A2,2 0 0,0 10,15A2,2 0 0,0 12,17M18,8A2,2 0 0,1 20,10V20A2,2 0 0,1 18,22H6A2,2 0 0,1 4,20V10C4,8.89 4.9,8 6,8H7V6A5,5 0 0,1 12,1A5,5 0 0,1 17,6V8H18M12,3A3,3 0 0,0 9,6V8H15V6A3,3 0 0,0 12,3Z"/></svg>
<div class="t" style="left:1491.20px;top:762.20px;font-size:17.5px;font-weight:400;letter-spacing:0.079px"><span style="color:#222">Lock file</span></div>
<svg style="position:absolute;left:1457.80px;top:801.60px" width="24" height="24" viewBox="0 0 24 24"><path fill="#222222" d="M11,4H13V16L18.5,10.5L19.92,11.92L12,19.84L4.08,11.92L5.5,10.5L11,16V4Z"/></svg>
<div class="t" style="left:1491.20px;top:803.00px;font-size:17.5px;font-weight:400;letter-spacing:0.387px"><span style="color:#222">Download</span></div>
<svg style="position:absolute;left:1457.80px;top:842.40px" width="24" height="24" viewBox="0 0 24 24"><path fill="#222222" d="M9,3V4H4V6H5V19A2,2 0 0,0 7,21H17A2,2 0 0,0 19,19V6H20V4H15V3H9M9,8H11V17H9V8M13,8H15V17H13V8Z"/></svg>
<div class="t" style="left:1491.20px;top:843.80px;font-size:17.5px;font-weight:400;letter-spacing:0.191px"><span style="color:#222">Delete file</span></div>
</body></html>
